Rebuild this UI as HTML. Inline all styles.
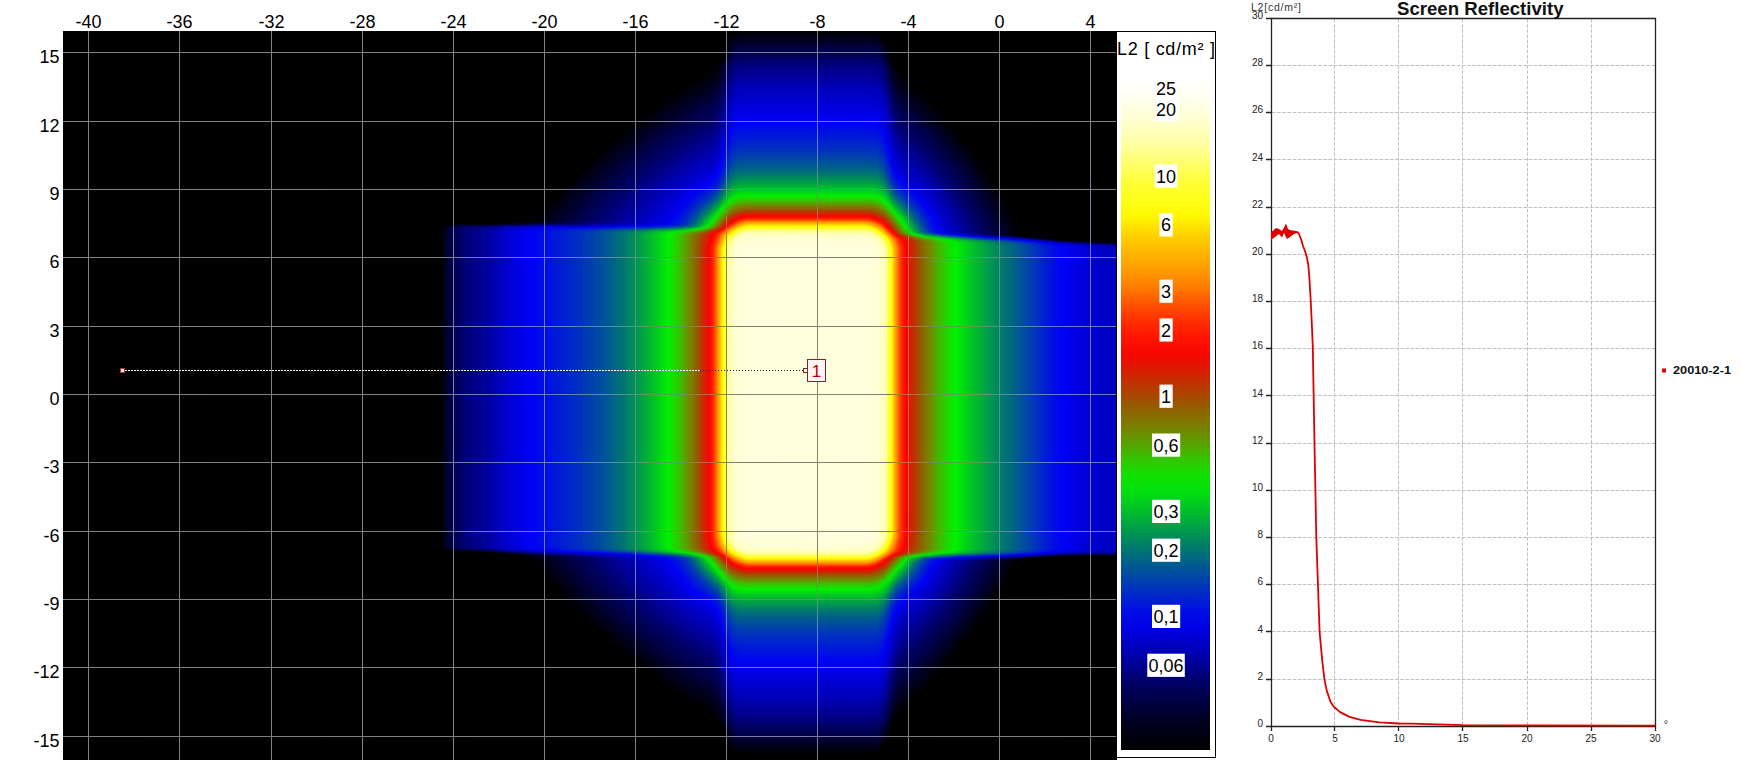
<!DOCTYPE html>
<html><head><meta charset="utf-8"><style>
html,body{margin:0;padding:0;background:#fff;width:1741px;height:760px;overflow:hidden}
svg{display:block}
</style></head><body>
<svg width="1741" height="760" viewBox="0 0 1741 760">
<defs><linearGradient id="cbg" x1="0" y1="0" x2="0" y2="1"><stop offset="0.0000" stop-color="#ffffff"/><stop offset="0.0250" stop-color="#fffffe"/><stop offset="0.0500" stop-color="#fffff1"/><stop offset="0.0750" stop-color="#ffffd9"/><stop offset="0.1000" stop-color="#ffffbe"/><stop offset="0.1250" stop-color="#ffff99"/><stop offset="0.1500" stop-color="#ffff66"/><stop offset="0.1750" stop-color="#ffff38"/><stop offset="0.2000" stop-color="#ffff18"/><stop offset="0.2250" stop-color="#fff700"/><stop offset="0.2500" stop-color="#ffd400"/><stop offset="0.2750" stop-color="#ffb700"/><stop offset="0.3000" stop-color="#ff9e00"/><stop offset="0.3250" stop-color="#ff7f00"/><stop offset="0.3500" stop-color="#ff5700"/><stop offset="0.3750" stop-color="#ff3000"/><stop offset="0.4000" stop-color="#ff1500"/><stop offset="0.4250" stop-color="#f70600"/><stop offset="0.4500" stop-color="#d71f00"/><stop offset="0.4750" stop-color="#b63a00"/><stop offset="0.5000" stop-color="#955b00"/><stop offset="0.5250" stop-color="#7f7800"/><stop offset="0.5500" stop-color="#609a00"/><stop offset="0.5750" stop-color="#39c100"/><stop offset="0.6000" stop-color="#12e100"/><stop offset="0.6250" stop-color="#00e00e"/><stop offset="0.6500" stop-color="#00c128"/><stop offset="0.6750" stop-color="#00a244"/><stop offset="0.7000" stop-color="#008165"/><stop offset="0.7250" stop-color="#006287"/><stop offset="0.7500" stop-color="#0044aa"/><stop offset="0.7750" stop-color="#0027ca"/><stop offset="0.8000" stop-color="#000de7"/><stop offset="0.8250" stop-color="#0000e3"/><stop offset="0.8500" stop-color="#0000c0"/><stop offset="0.8750" stop-color="#000097"/><stop offset="0.9000" stop-color="#00006b"/><stop offset="0.9250" stop-color="#000049"/><stop offset="0.9500" stop-color="#000029"/><stop offset="0.9750" stop-color="#000014"/><stop offset="1.0000" stop-color="#000000"/></linearGradient><linearGradient id="gv0" gradientUnits="userSpaceOnUse" x1="0" y1="31" x2="0" y2="760"><stop offset="0.0007" stop-color="#808080"/><stop offset="0.9993" stop-color="#808080"/></linearGradient><linearGradient id="gv1" gradientUnits="userSpaceOnUse" x1="0" y1="31" x2="0" y2="760"><stop offset="0.0007" stop-color="#808080"/><stop offset="0.9993" stop-color="#808080"/></linearGradient><linearGradient id="gv2" gradientUnits="userSpaceOnUse" x1="0" y1="31" x2="0" y2="760"><stop offset="0.0007" stop-color="#808080"/><stop offset="0.9993" stop-color="#808080"/></linearGradient><linearGradient id="gv3" gradientUnits="userSpaceOnUse" x1="0" y1="31" x2="0" y2="760"><stop offset="0.0007" stop-color="#808080"/><stop offset="0.9993" stop-color="#808080"/></linearGradient><linearGradient id="gv4" gradientUnits="userSpaceOnUse" x1="0" y1="31" x2="0" y2="760"><stop offset="0.0007" stop-color="#808080"/><stop offset="0.2654" stop-color="#7e7e88"/><stop offset="0.2668" stop-color="#7d7d92"/><stop offset="0.2682" stop-color="#7c7c9c"/><stop offset="0.2709" stop-color="#7b7ba3"/><stop offset="0.7112" stop-color="#7d7d95"/><stop offset="0.7126" stop-color="#7e7e8b"/><stop offset="0.7140" stop-color="#808080"/><stop offset="0.9993" stop-color="#808080"/></linearGradient><linearGradient id="gv5" gradientUnits="userSpaceOnUse" x1="0" y1="31" x2="0" y2="760"><stop offset="0.0007" stop-color="#808080"/><stop offset="0.2572" stop-color="#7f7f86"/><stop offset="0.2613" stop-color="#7e7e8d"/><stop offset="0.2627" stop-color="#7d7d95"/><stop offset="0.2641" stop-color="#7b7ba3"/><stop offset="0.2654" stop-color="#7979b6"/><stop offset="0.2668" stop-color="#7676cb"/><stop offset="0.2682" stop-color="#7474da"/><stop offset="0.2695" stop-color="#7272e5"/><stop offset="0.2709" stop-color="#7272ec"/><stop offset="0.2737" stop-color="#6f75e3"/><stop offset="0.7112" stop-color="#7172e9"/><stop offset="0.7140" stop-color="#7373df"/><stop offset="0.7154" stop-color="#7575d2"/><stop offset="0.7167" stop-color="#7777bf"/><stop offset="0.7181" stop-color="#7a7aab"/><stop offset="0.7195" stop-color="#7c7c9c"/><stop offset="0.7209" stop-color="#7d7d91"/><stop offset="0.7236" stop-color="#7e7e8b"/><stop offset="0.7373" stop-color="#7f7f85"/><stop offset="0.9993" stop-color="#808080"/></linearGradient><linearGradient id="gv6" gradientUnits="userSpaceOnUse" x1="0" y1="31" x2="0" y2="760"><stop offset="0.0007" stop-color="#808080"/><stop offset="0.1351" stop-color="#7f7f86"/><stop offset="0.1461" stop-color="#7e7e8c"/><stop offset="0.1571" stop-color="#7d7d93"/><stop offset="0.1653" stop-color="#7c7c99"/><stop offset="0.1763" stop-color="#7b7b9f"/><stop offset="0.1872" stop-color="#7b7ba5"/><stop offset="0.1996" stop-color="#7a7aac"/><stop offset="0.2092" stop-color="#7979b2"/><stop offset="0.2188" stop-color="#7878b8"/><stop offset="0.2298" stop-color="#7777bf"/><stop offset="0.2407" stop-color="#7777c5"/><stop offset="0.2531" stop-color="#7676cc"/><stop offset="0.2627" stop-color="#7575d2"/><stop offset="0.2654" stop-color="#7373dd"/><stop offset="0.2668" stop-color="#7272e8"/><stop offset="0.2682" stop-color="#6d77dd"/><stop offset="0.2695" stop-color="#677ec7"/><stop offset="0.2709" stop-color="#6086af"/><stop offset="0.2723" stop-color="#5a8d9b"/><stop offset="0.2737" stop-color="#56928d"/><stop offset="0.2750" stop-color="#539683"/><stop offset="0.2778" stop-color="#50987b"/><stop offset="0.7126" stop-color="#549487"/><stop offset="0.7140" stop-color="#589093"/><stop offset="0.7154" stop-color="#5d8aa4"/><stop offset="0.7167" stop-color="#6383ba"/><stop offset="0.7181" stop-color="#6a7bd1"/><stop offset="0.7195" stop-color="#7073e6"/><stop offset="0.7222" stop-color="#7474da"/><stop offset="0.7250" stop-color="#7575d2"/><stop offset="0.7373" stop-color="#7676cc"/><stop offset="0.7497" stop-color="#7676c6"/><stop offset="0.7606" stop-color="#7777c0"/><stop offset="0.7716" stop-color="#7878b9"/><stop offset="0.7812" stop-color="#7979b3"/><stop offset="0.7908" stop-color="#7a7aac"/><stop offset="0.8032" stop-color="#7b7ba6"/><stop offset="0.8155" stop-color="#7b7b9f"/><stop offset="0.8265" stop-color="#7c7c99"/><stop offset="0.8347" stop-color="#7d7d93"/><stop offset="0.8457" stop-color="#7e7e8c"/><stop offset="0.8567" stop-color="#7f7f86"/><stop offset="0.8676" stop-color="#808080"/><stop offset="0.9993" stop-color="#808080"/></linearGradient><linearGradient id="gv7" gradientUnits="userSpaceOnUse" x1="0" y1="31" x2="0" y2="760"><stop offset="0.0007" stop-color="#808080"/><stop offset="0.0254" stop-color="#7f7f86"/><stop offset="0.0322" stop-color="#7e7e8c"/><stop offset="0.0391" stop-color="#7d7d93"/><stop offset="0.0446" stop-color="#7c7c9b"/><stop offset="0.0514" stop-color="#7b7ba1"/><stop offset="0.0610" stop-color="#7a7aa8"/><stop offset="0.0693" stop-color="#7979ae"/><stop offset="0.0761" stop-color="#7979b5"/><stop offset="0.0830" stop-color="#7878bb"/><stop offset="0.0912" stop-color="#7777c1"/><stop offset="0.0995" stop-color="#7676c8"/><stop offset="0.1077" stop-color="#7575ce"/><stop offset="0.1173" stop-color="#7575d4"/><stop offset="0.1269" stop-color="#7474da"/><stop offset="0.1365" stop-color="#7373e1"/><stop offset="0.1461" stop-color="#7272e7"/><stop offset="0.1653" stop-color="#6e76e0"/><stop offset="0.1722" stop-color="#6c78d8"/><stop offset="0.1776" stop-color="#6a7bd2"/><stop offset="0.1831" stop-color="#687dcb"/><stop offset="0.1886" stop-color="#6580c3"/><stop offset="0.1927" stop-color="#6382bb"/><stop offset="0.1968" stop-color="#6185b3"/><stop offset="0.2010" stop-color="#5e88ab"/><stop offset="0.2037" stop-color="#5d8aa5"/><stop offset="0.2064" stop-color="#5b8c9e"/><stop offset="0.2092" stop-color="#598f97"/><stop offset="0.2119" stop-color="#579190"/><stop offset="0.2147" stop-color="#549488"/><stop offset="0.2174" stop-color="#52977f"/><stop offset="0.2202" stop-color="#4f9a76"/><stop offset="0.2229" stop-color="#4b9e6c"/><stop offset="0.2257" stop-color="#48a163"/><stop offset="0.2284" stop-color="#45a55a"/><stop offset="0.2311" stop-color="#41a850"/><stop offset="0.2339" stop-color="#3eac45"/><stop offset="0.2366" stop-color="#3ab13a"/><stop offset="0.2394" stop-color="#45ab3b"/><stop offset="0.2407" stop-color="#4ba73c"/><stop offset="0.2421" stop-color="#52a33d"/><stop offset="0.2435" stop-color="#59a03e"/><stop offset="0.2449" stop-color="#619b40"/><stop offset="0.2462" stop-color="#699742"/><stop offset="0.2476" stop-color="#719343"/><stop offset="0.2490" stop-color="#798e45"/><stop offset="0.2503" stop-color="#828947"/><stop offset="0.2531" stop-color="#8c834b"/><stop offset="0.2558" stop-color="#987d4e"/><stop offset="0.2572" stop-color="#a07850"/><stop offset="0.2586" stop-color="#a87452"/><stop offset="0.2599" stop-color="#b06f54"/><stop offset="0.2613" stop-color="#b86b55"/><stop offset="0.2627" stop-color="#bf6756"/><stop offset="0.2641" stop-color="#c76357"/><stop offset="0.2654" stop-color="#d05e58"/><stop offset="0.2668" stop-color="#d95959"/><stop offset="0.2695" stop-color="#cf6050"/><stop offset="0.2709" stop-color="#c96549"/><stop offset="0.2723" stop-color="#bf6b40"/><stop offset="0.2737" stop-color="#b67236"/><stop offset="0.2750" stop-color="#ae782e"/><stop offset="0.2778" stop-color="#a47f24"/><stop offset="0.2805" stop-color="#9b851b"/><stop offset="0.2833" stop-color="#928b12"/><stop offset="0.2874" stop-color="#8d8d19"/><stop offset="0.2901" stop-color="#8b8b23"/><stop offset="0.2929" stop-color="#8a8a2a"/><stop offset="0.2956" stop-color="#898933"/><stop offset="0.2984" stop-color="#88883c"/><stop offset="0.3025" stop-color="#878744"/><stop offset="0.6934" stop-color="#88883c"/><stop offset="0.6962" stop-color="#898933"/><stop offset="0.6989" stop-color="#8a8a2a"/><stop offset="0.7016" stop-color="#8b8b23"/><stop offset="0.7044" stop-color="#8d8d19"/><stop offset="0.7071" stop-color="#8e8e0f"/><stop offset="0.7099" stop-color="#968817"/><stop offset="0.7126" stop-color="#a08220"/><stop offset="0.7154" stop-color="#a97b29"/><stop offset="0.7181" stop-color="#b77138"/><stop offset="0.7195" stop-color="#c16a41"/><stop offset="0.7209" stop-color="#ca644a"/><stop offset="0.7236" stop-color="#d55c55"/><stop offset="0.7277" stop-color="#c76357"/><stop offset="0.7291" stop-color="#bf6756"/><stop offset="0.7305" stop-color="#b86b55"/><stop offset="0.7318" stop-color="#b06f54"/><stop offset="0.7332" stop-color="#a87452"/><stop offset="0.7346" stop-color="#a07850"/><stop offset="0.7359" stop-color="#987d4e"/><stop offset="0.7373" stop-color="#91804d"/><stop offset="0.7401" stop-color="#878649"/><stop offset="0.7428" stop-color="#798e45"/><stop offset="0.7442" stop-color="#719343"/><stop offset="0.7455" stop-color="#699742"/><stop offset="0.7469" stop-color="#619b40"/><stop offset="0.7483" stop-color="#59a03e"/><stop offset="0.7497" stop-color="#52a33d"/><stop offset="0.7510" stop-color="#4ba73c"/><stop offset="0.7524" stop-color="#45ab3b"/><stop offset="0.7538" stop-color="#3eae3a"/><stop offset="0.7565" stop-color="#3cae40"/><stop offset="0.7593" stop-color="#3faa4b"/><stop offset="0.7620" stop-color="#43a755"/><stop offset="0.7647" stop-color="#47a35e"/><stop offset="0.7675" stop-color="#4aa067"/><stop offset="0.7702" stop-color="#4d9c71"/><stop offset="0.7730" stop-color="#50997b"/><stop offset="0.7757" stop-color="#539584"/><stop offset="0.7785" stop-color="#56928c"/><stop offset="0.7812" stop-color="#589094"/><stop offset="0.7840" stop-color="#5a8d9b"/><stop offset="0.7867" stop-color="#5c8ba1"/><stop offset="0.7894" stop-color="#5e89a8"/><stop offset="0.7936" stop-color="#6086b0"/><stop offset="0.7977" stop-color="#6283b9"/><stop offset="0.8018" stop-color="#6581c0"/><stop offset="0.8059" stop-color="#677ec7"/><stop offset="0.8114" stop-color="#697cce"/><stop offset="0.8169" stop-color="#6b79d5"/><stop offset="0.8224" stop-color="#6d77db"/><stop offset="0.8292" stop-color="#6f75e3"/><stop offset="0.8361" stop-color="#7172ea"/><stop offset="0.8512" stop-color="#7373e3"/><stop offset="0.8608" stop-color="#7373dd"/><stop offset="0.8704" stop-color="#7474d7"/><stop offset="0.8800" stop-color="#7575d1"/><stop offset="0.8882" stop-color="#7676cb"/><stop offset="0.8964" stop-color="#7777c4"/><stop offset="0.9047" stop-color="#7777be"/><stop offset="0.9129" stop-color="#7878b8"/><stop offset="0.9198" stop-color="#7979b1"/><stop offset="0.9266" stop-color="#7a7aab"/><stop offset="0.9362" stop-color="#7b7ba4"/><stop offset="0.9458" stop-color="#7c7c9c"/><stop offset="0.9513" stop-color="#7d7d95"/><stop offset="0.9568" stop-color="#7e7e8f"/><stop offset="0.9636" stop-color="#7e7e89"/><stop offset="0.9705" stop-color="#7f7f82"/><stop offset="0.9993" stop-color="#808080"/></linearGradient><linearGradient id="gv8" gradientUnits="userSpaceOnUse" x1="0" y1="31" x2="0" y2="760"><stop offset="0.0007" stop-color="#7f7f83"/><stop offset="0.0075" stop-color="#7e7e8a"/><stop offset="0.0144" stop-color="#7d7d91"/><stop offset="0.0185" stop-color="#7c7c97"/><stop offset="0.0240" stop-color="#7c7c9d"/><stop offset="0.0309" stop-color="#7b7ba4"/><stop offset="0.0377" stop-color="#7a7aac"/><stop offset="0.0432" stop-color="#7979b3"/><stop offset="0.0487" stop-color="#7878ba"/><stop offset="0.0569" stop-color="#7777c0"/><stop offset="0.0652" stop-color="#7676c7"/><stop offset="0.0734" stop-color="#7575ce"/><stop offset="0.0830" stop-color="#7575d4"/><stop offset="0.0940" stop-color="#7474da"/><stop offset="0.1049" stop-color="#7373e1"/><stop offset="0.1159" stop-color="#7272e8"/><stop offset="0.1351" stop-color="#6e75e1"/><stop offset="0.1420" stop-color="#6c77db"/><stop offset="0.1488" stop-color="#6a7ad4"/><stop offset="0.1557" stop-color="#687ccd"/><stop offset="0.1626" stop-color="#667fc6"/><stop offset="0.1680" stop-color="#6481be"/><stop offset="0.1735" stop-color="#6284b6"/><stop offset="0.1776" stop-color="#6086b0"/><stop offset="0.1818" stop-color="#5e89a9"/><stop offset="0.1859" stop-color="#5c8ba1"/><stop offset="0.1900" stop-color="#5a8e99"/><stop offset="0.1941" stop-color="#579191"/><stop offset="0.1968" stop-color="#55938b"/><stop offset="0.1996" stop-color="#539584"/><stop offset="0.2023" stop-color="#51987e"/><stop offset="0.2051" stop-color="#4f9a76"/><stop offset="0.2078" stop-color="#4c9d6e"/><stop offset="0.2106" stop-color="#4aa066"/><stop offset="0.2133" stop-color="#47a35f"/><stop offset="0.2160" stop-color="#44a657"/><stop offset="0.2188" stop-color="#41a94e"/><stop offset="0.2215" stop-color="#3dac45"/><stop offset="0.2243" stop-color="#3ab03b"/><stop offset="0.2270" stop-color="#43ac3b"/><stop offset="0.2284" stop-color="#49a93c"/><stop offset="0.2298" stop-color="#4fa53d"/><stop offset="0.2311" stop-color="#56a13e"/><stop offset="0.2325" stop-color="#5d9e3f"/><stop offset="0.2339" stop-color="#659941"/><stop offset="0.2353" stop-color="#6d9542"/><stop offset="0.2366" stop-color="#759044"/><stop offset="0.2380" stop-color="#7d8c46"/><stop offset="0.2394" stop-color="#858848"/><stop offset="0.2421" stop-color="#8f824c"/><stop offset="0.2435" stop-color="#957e4e"/><stop offset="0.2449" stop-color="#9e7950"/><stop offset="0.2462" stop-color="#a67551"/><stop offset="0.2476" stop-color="#af7053"/><stop offset="0.2490" stop-color="#b86b55"/><stop offset="0.2503" stop-color="#c16656"/><stop offset="0.2517" stop-color="#ca6257"/><stop offset="0.2531" stop-color="#d35c59"/><stop offset="0.2558" stop-color="#d25e52"/><stop offset="0.2586" stop-color="#c46845"/><stop offset="0.2599" stop-color="#bb6e3c"/><stop offset="0.2613" stop-color="#b17532"/><stop offset="0.2627" stop-color="#aa7a2b"/><stop offset="0.2641" stop-color="#a37f24"/><stop offset="0.2654" stop-color="#9c841d"/><stop offset="0.2668" stop-color="#938a14"/><stop offset="0.2695" stop-color="#8c8c1f"/><stop offset="0.2709" stop-color="#8a8a2a"/><stop offset="0.2723" stop-color="#88883a"/><stop offset="0.2737" stop-color="#878748"/><stop offset="0.2750" stop-color="#858551"/><stop offset="0.2764" stop-color="#84845a"/><stop offset="0.2791" stop-color="#838363"/><stop offset="0.2833" stop-color="#82826b"/><stop offset="0.7126" stop-color="#838365"/><stop offset="0.7154" stop-color="#84845e"/><stop offset="0.7167" stop-color="#858556"/><stop offset="0.7181" stop-color="#86864c"/><stop offset="0.7195" stop-color="#88883e"/><stop offset="0.7209" stop-color="#8a8a2c"/><stop offset="0.7222" stop-color="#8c8c20"/><stop offset="0.7236" stop-color="#8d8d14"/><stop offset="0.7263" stop-color="#9c841d"/><stop offset="0.7277" stop-color="#a37f24"/><stop offset="0.7291" stop-color="#aa7a2b"/><stop offset="0.7305" stop-color="#b17532"/><stop offset="0.7318" stop-color="#bb6e3c"/><stop offset="0.7332" stop-color="#c46845"/><stop offset="0.7346" stop-color="#cc624d"/><stop offset="0.7373" stop-color="#d75b57"/><stop offset="0.7401" stop-color="#ca6257"/><stop offset="0.7414" stop-color="#c16656"/><stop offset="0.7428" stop-color="#b86b55"/><stop offset="0.7442" stop-color="#af7053"/><stop offset="0.7455" stop-color="#a67551"/><stop offset="0.7469" stop-color="#9e7950"/><stop offset="0.7483" stop-color="#957e4e"/><stop offset="0.7497" stop-color="#8f824c"/><stop offset="0.7524" stop-color="#858848"/><stop offset="0.7538" stop-color="#7d8c46"/><stop offset="0.7551" stop-color="#759044"/><stop offset="0.7565" stop-color="#6d9542"/><stop offset="0.7579" stop-color="#659941"/><stop offset="0.7593" stop-color="#5d9e3f"/><stop offset="0.7606" stop-color="#56a13e"/><stop offset="0.7620" stop-color="#4fa53d"/><stop offset="0.7634" stop-color="#49a93c"/><stop offset="0.7647" stop-color="#43ac3b"/><stop offset="0.7661" stop-color="#3caf3a"/><stop offset="0.7689" stop-color="#3cae40"/><stop offset="0.7716" stop-color="#3fab4a"/><stop offset="0.7743" stop-color="#42a753"/><stop offset="0.7771" stop-color="#45a45b"/><stop offset="0.7798" stop-color="#48a163"/><stop offset="0.7826" stop-color="#4b9e6a"/><stop offset="0.7853" stop-color="#4d9c72"/><stop offset="0.7881" stop-color="#50997a"/><stop offset="0.7908" stop-color="#529681"/><stop offset="0.7936" stop-color="#549488"/><stop offset="0.7963" stop-color="#56928e"/><stop offset="0.8004" stop-color="#598f97"/><stop offset="0.8045" stop-color="#5b8c9f"/><stop offset="0.8086" stop-color="#5d89a6"/><stop offset="0.8128" stop-color="#5f87ad"/><stop offset="0.8169" stop-color="#6185b4"/><stop offset="0.8210" stop-color="#6383ba"/><stop offset="0.8265" stop-color="#6580c2"/><stop offset="0.8320" stop-color="#677ec9"/><stop offset="0.8388" stop-color="#697bd0"/><stop offset="0.8457" stop-color="#6b79d7"/><stop offset="0.8525" stop-color="#6d77dd"/><stop offset="0.8594" stop-color="#6f74e4"/><stop offset="0.8663" stop-color="#7172ea"/><stop offset="0.8827" stop-color="#7373e3"/><stop offset="0.8937" stop-color="#7373dd"/><stop offset="0.9047" stop-color="#7474d7"/><stop offset="0.9156" stop-color="#7575d0"/><stop offset="0.9239" stop-color="#7676c9"/><stop offset="0.9321" stop-color="#7777c3"/><stop offset="0.9403" stop-color="#7878bc"/><stop offset="0.9472" stop-color="#7979b5"/><stop offset="0.9527" stop-color="#7a7aad"/><stop offset="0.9582" stop-color="#7a7aa7"/><stop offset="0.9650" stop-color="#7b7ba0"/><stop offset="0.9719" stop-color="#7c7c99"/><stop offset="0.9760" stop-color="#7d7d93"/><stop offset="0.9815" stop-color="#7e7e8c"/><stop offset="0.9883" stop-color="#7f7f85"/><stop offset="0.9993" stop-color="#808080"/></linearGradient><linearGradient id="gv9" gradientUnits="userSpaceOnUse" x1="0" y1="31" x2="0" y2="760"><stop offset="0.0007" stop-color="#808080"/><stop offset="0.0775" stop-color="#7f7f86"/><stop offset="0.0885" stop-color="#7e7e8d"/><stop offset="0.0981" stop-color="#7d7d93"/><stop offset="0.1063" stop-color="#7c7c99"/><stop offset="0.1173" stop-color="#7b7ba0"/><stop offset="0.1283" stop-color="#7a7aa7"/><stop offset="0.1392" stop-color="#7a7aae"/><stop offset="0.1475" stop-color="#7979b4"/><stop offset="0.1557" stop-color="#7878bb"/><stop offset="0.1639" stop-color="#7777c1"/><stop offset="0.1722" stop-color="#7676c7"/><stop offset="0.1804" stop-color="#7575ce"/><stop offset="0.1900" stop-color="#7575d4"/><stop offset="0.1982" stop-color="#7474db"/><stop offset="0.2051" stop-color="#7373e1"/><stop offset="0.2106" stop-color="#7272e7"/><stop offset="0.2215" stop-color="#6e76df"/><stop offset="0.2257" stop-color="#6b79d7"/><stop offset="0.2284" stop-color="#697bd1"/><stop offset="0.2311" stop-color="#687dca"/><stop offset="0.2339" stop-color="#6580c3"/><stop offset="0.2366" stop-color="#6382bb"/><stop offset="0.2394" stop-color="#6185b2"/><stop offset="0.2421" stop-color="#5e89a9"/><stop offset="0.2449" stop-color="#5b8c9f"/><stop offset="0.2476" stop-color="#588f95"/><stop offset="0.2503" stop-color="#55938b"/><stop offset="0.2531" stop-color="#529780"/><stop offset="0.2558" stop-color="#4f9a76"/><stop offset="0.2586" stop-color="#4b9e6b"/><stop offset="0.2613" stop-color="#48a262"/><stop offset="0.2641" stop-color="#45a559"/><stop offset="0.2668" stop-color="#41a850"/><stop offset="0.2695" stop-color="#3eac47"/><stop offset="0.2723" stop-color="#3baf3e"/><stop offset="0.2750" stop-color="#41ad3a"/><stop offset="0.2764" stop-color="#4da63c"/><stop offset="0.2778" stop-color="#5f9d3f"/><stop offset="0.2791" stop-color="#769044"/><stop offset="0.2805" stop-color="#8a844a"/><stop offset="0.2819" stop-color="#9b7b4f"/><stop offset="0.2833" stop-color="#ac7153"/><stop offset="0.2846" stop-color="#b86b55"/><stop offset="0.2860" stop-color="#c06756"/><stop offset="0.2888" stop-color="#c86257"/><stop offset="0.2997" stop-color="#ce5f58"/><stop offset="0.7058" stop-color="#c86357"/><stop offset="0.7126" stop-color="#bf6756"/><stop offset="0.7154" stop-color="#b06f54"/><stop offset="0.7167" stop-color="#a27751"/><stop offset="0.7181" stop-color="#90814c"/><stop offset="0.7195" stop-color="#7f8b46"/><stop offset="0.7209" stop-color="#629b40"/><stop offset="0.7222" stop-color="#49a83c"/><stop offset="0.7236" stop-color="#3ab03d"/><stop offset="0.7250" stop-color="#3fab49"/><stop offset="0.7263" stop-color="#42a852"/><stop offset="0.7277" stop-color="#44a558"/><stop offset="0.7305" stop-color="#48a262"/><stop offset="0.7332" stop-color="#4b9e6b"/><stop offset="0.7359" stop-color="#4f9a76"/><stop offset="0.7387" stop-color="#529780"/><stop offset="0.7414" stop-color="#55938b"/><stop offset="0.7442" stop-color="#588f95"/><stop offset="0.7469" stop-color="#5b8c9f"/><stop offset="0.7497" stop-color="#5e89a9"/><stop offset="0.7524" stop-color="#6185b2"/><stop offset="0.7551" stop-color="#6382bb"/><stop offset="0.7579" stop-color="#6580c3"/><stop offset="0.7606" stop-color="#687dca"/><stop offset="0.7634" stop-color="#697bd1"/><stop offset="0.7661" stop-color="#6b79d7"/><stop offset="0.7702" stop-color="#6e76df"/><stop offset="0.7743" stop-color="#7073e7"/><stop offset="0.7867" stop-color="#7373e1"/><stop offset="0.7936" stop-color="#7474db"/><stop offset="0.8018" stop-color="#7575d4"/><stop offset="0.8114" stop-color="#7575ce"/><stop offset="0.8196" stop-color="#7676c7"/><stop offset="0.8278" stop-color="#7777c1"/><stop offset="0.8361" stop-color="#7878bb"/><stop offset="0.8443" stop-color="#7979b4"/><stop offset="0.8525" stop-color="#7a7aae"/><stop offset="0.8621" stop-color="#7a7aa8"/><stop offset="0.8731" stop-color="#7b7ba1"/><stop offset="0.8841" stop-color="#7c7c9a"/><stop offset="0.8923" stop-color="#7d7d94"/><stop offset="0.9019" stop-color="#7e7e8e"/><stop offset="0.9129" stop-color="#7f7f87"/><stop offset="0.9225" stop-color="#7f7f81"/><stop offset="0.9993" stop-color="#808080"/></linearGradient><linearGradient id="gv10" gradientUnits="userSpaceOnUse" x1="0" y1="31" x2="0" y2="760"><stop offset="0.0007" stop-color="#808080"/><stop offset="0.2325" stop-color="#7f7f86"/><stop offset="0.2476" stop-color="#7e7e8d"/><stop offset="0.2641" stop-color="#7d7d93"/><stop offset="0.2778" stop-color="#7c7c9b"/><stop offset="0.2791" stop-color="#7b7ba2"/><stop offset="0.2805" stop-color="#7979af"/><stop offset="0.2819" stop-color="#7676c8"/><stop offset="0.2833" stop-color="#7373e1"/><stop offset="0.2846" stop-color="#6d77dd"/><stop offset="0.2860" stop-color="#6580c2"/><stop offset="0.2874" stop-color="#5e88aa"/><stop offset="0.2888" stop-color="#5a8e9a"/><stop offset="0.2901" stop-color="#579190"/><stop offset="0.2929" stop-color="#549487"/><stop offset="0.7140" stop-color="#57918f"/><stop offset="0.7154" stop-color="#598e98"/><stop offset="0.7167" stop-color="#5e89a8"/><stop offset="0.7181" stop-color="#6481bf"/><stop offset="0.7195" stop-color="#6c78d9"/><stop offset="0.7209" stop-color="#7373e3"/><stop offset="0.7222" stop-color="#7676cb"/><stop offset="0.7236" stop-color="#7979b0"/><stop offset="0.7250" stop-color="#7b7ba1"/><stop offset="0.7263" stop-color="#7c7c99"/><stop offset="0.7291" stop-color="#7d7d93"/><stop offset="0.7442" stop-color="#7e7e8d"/><stop offset="0.7593" stop-color="#7f7f86"/><stop offset="0.7730" stop-color="#808080"/><stop offset="0.9993" stop-color="#808080"/></linearGradient><linearGradient id="gv11" gradientUnits="userSpaceOnUse" x1="0" y1="31" x2="0" y2="760"><stop offset="0.0007" stop-color="#808080"/><stop offset="0.2901" stop-color="#7b7b9f"/><stop offset="0.2915" stop-color="#7878b9"/><stop offset="0.2929" stop-color="#7676cc"/><stop offset="0.2942" stop-color="#7474d5"/><stop offset="0.2970" stop-color="#7474dc"/><stop offset="0.7154" stop-color="#7575d0"/><stop offset="0.7167" stop-color="#7777c0"/><stop offset="0.7181" stop-color="#7a7aa7"/><stop offset="0.7195" stop-color="#7e7e8b"/><stop offset="0.7209" stop-color="#808080"/><stop offset="0.9993" stop-color="#808080"/></linearGradient><linearGradient id="gh12" gradientUnits="userSpaceOnUse" x1="63" y1="0" x2="1117" y2="0"><stop offset="0.0005" stop-color="#808080"/><stop offset="0.6286" stop-color="#7f7f86"/><stop offset="0.6305" stop-color="#7e7e8d"/><stop offset="0.6333" stop-color="#7d7d96"/><stop offset="0.6361" stop-color="#7c7c9d"/><stop offset="0.7785" stop-color="#7d7d96"/><stop offset="0.7804" stop-color="#7d7d90"/><stop offset="0.7832" stop-color="#7f7f86"/><stop offset="0.7851" stop-color="#808080"/><stop offset="0.9995" stop-color="#808080"/></linearGradient><linearGradient id="gh13" gradientUnits="userSpaceOnUse" x1="63" y1="0" x2="1117" y2="0"><stop offset="0.0005" stop-color="#808080"/><stop offset="0.5527" stop-color="#7f7f86"/><stop offset="0.5631" stop-color="#7e7e8d"/><stop offset="0.5726" stop-color="#7d7d93"/><stop offset="0.5802" stop-color="#7c7c99"/><stop offset="0.5906" stop-color="#7b7b9f"/><stop offset="0.6020" stop-color="#7b7ba6"/><stop offset="0.6134" stop-color="#7a7aac"/><stop offset="0.6191" stop-color="#7979b3"/><stop offset="0.6219" stop-color="#7878ba"/><stop offset="0.6238" stop-color="#7777c1"/><stop offset="0.6257" stop-color="#7676c9"/><stop offset="0.6276" stop-color="#7575d2"/><stop offset="0.6295" stop-color="#7474d9"/><stop offset="0.6314" stop-color="#7373df"/><stop offset="0.6343" stop-color="#7272e6"/><stop offset="0.6399" stop-color="#7272ec"/><stop offset="0.7775" stop-color="#7272e6"/><stop offset="0.7804" stop-color="#7373df"/><stop offset="0.7823" stop-color="#7474d9"/><stop offset="0.7842" stop-color="#7575d1"/><stop offset="0.7861" stop-color="#7676c8"/><stop offset="0.7880" stop-color="#7777bf"/><stop offset="0.7898" stop-color="#7878b8"/><stop offset="0.7927" stop-color="#7979af"/><stop offset="0.7974" stop-color="#7a7aa8"/><stop offset="0.8050" stop-color="#7b7ba2"/><stop offset="0.8126" stop-color="#7c7c9b"/><stop offset="0.8193" stop-color="#7d7d94"/><stop offset="0.8259" stop-color="#7e7e8d"/><stop offset="0.8325" stop-color="#7f7f87"/><stop offset="0.8392" stop-color="#7f7f81"/><stop offset="0.9995" stop-color="#808080"/></linearGradient><linearGradient id="gh14" gradientUnits="userSpaceOnUse" x1="63" y1="0" x2="1117" y2="0"><stop offset="0.0005" stop-color="#808080"/><stop offset="0.4806" stop-color="#7f7f86"/><stop offset="0.4891" stop-color="#7e7e8c"/><stop offset="0.4976" stop-color="#7d7d93"/><stop offset="0.5043" stop-color="#7c7c99"/><stop offset="0.5128" stop-color="#7b7b9f"/><stop offset="0.5213" stop-color="#7b7ba5"/><stop offset="0.5308" stop-color="#7a7aac"/><stop offset="0.5375" stop-color="#7979b2"/><stop offset="0.5441" stop-color="#7878b8"/><stop offset="0.5517" stop-color="#7777bf"/><stop offset="0.5593" stop-color="#7777c5"/><stop offset="0.5669" stop-color="#7676cc"/><stop offset="0.5745" stop-color="#7575d2"/><stop offset="0.5830" stop-color="#7474d8"/><stop offset="0.5906" stop-color="#7373df"/><stop offset="0.5972" stop-color="#7272e6"/><stop offset="0.6029" stop-color="#7172ec"/><stop offset="0.6067" stop-color="#7074e5"/><stop offset="0.6105" stop-color="#6e76df"/><stop offset="0.6143" stop-color="#6b79d7"/><stop offset="0.6172" stop-color="#697bd0"/><stop offset="0.6191" stop-color="#677ec9"/><stop offset="0.6210" stop-color="#6581c0"/><stop offset="0.6229" stop-color="#6185b4"/><stop offset="0.6238" stop-color="#5f87ad"/><stop offset="0.6248" stop-color="#5d8aa6"/><stop offset="0.6257" stop-color="#5b8c9e"/><stop offset="0.6267" stop-color="#598f96"/><stop offset="0.6276" stop-color="#56928e"/><stop offset="0.6286" stop-color="#549487"/><stop offset="0.6295" stop-color="#52977f"/><stop offset="0.6305" stop-color="#4f9978"/><stop offset="0.6314" stop-color="#4d9c72"/><stop offset="0.6333" stop-color="#4a9f68"/><stop offset="0.6352" stop-color="#48a261"/><stop offset="0.6380" stop-color="#45a45a"/><stop offset="0.6447" stop-color="#43a754"/><stop offset="0.7737" stop-color="#45a45a"/><stop offset="0.7766" stop-color="#48a261"/><stop offset="0.7785" stop-color="#4a9f68"/><stop offset="0.7804" stop-color="#4d9c72"/><stop offset="0.7813" stop-color="#4f9978"/><stop offset="0.7823" stop-color="#52977f"/><stop offset="0.7832" stop-color="#549487"/><stop offset="0.7842" stop-color="#57918f"/><stop offset="0.7851" stop-color="#598f97"/><stop offset="0.7861" stop-color="#5b8c9f"/><stop offset="0.7870" stop-color="#5d89a7"/><stop offset="0.7880" stop-color="#6087af"/><stop offset="0.7889" stop-color="#6284b6"/><stop offset="0.7898" stop-color="#6482bd"/><stop offset="0.7908" stop-color="#6580c3"/><stop offset="0.7927" stop-color="#687dcc"/><stop offset="0.7946" stop-color="#6a7ad3"/><stop offset="0.7974" stop-color="#6d77dc"/><stop offset="0.8003" stop-color="#6f75e3"/><stop offset="0.8031" stop-color="#7172e9"/><stop offset="0.8107" stop-color="#7373e2"/><stop offset="0.8155" stop-color="#7474db"/><stop offset="0.8202" stop-color="#7575d5"/><stop offset="0.8259" stop-color="#7575ce"/><stop offset="0.8306" stop-color="#7676c7"/><stop offset="0.8354" stop-color="#7777c0"/><stop offset="0.8401" stop-color="#7878b9"/><stop offset="0.8449" stop-color="#7979b2"/><stop offset="0.8496" stop-color="#7a7aab"/><stop offset="0.8553" stop-color="#7b7ba5"/><stop offset="0.8610" stop-color="#7b7b9f"/><stop offset="0.8667" stop-color="#7c7c99"/><stop offset="0.8714" stop-color="#7d7d92"/><stop offset="0.8781" stop-color="#7e7e8b"/><stop offset="0.8838" stop-color="#7f7f84"/><stop offset="0.9995" stop-color="#808080"/></linearGradient><linearGradient id="gh15" gradientUnits="userSpaceOnUse" x1="63" y1="0" x2="1117" y2="0"><stop offset="0.0005" stop-color="#808080"/><stop offset="0.3601" stop-color="#7e7e87"/><stop offset="0.3629" stop-color="#7d7d90"/><stop offset="0.3657" stop-color="#7c7c99"/><stop offset="0.3686" stop-color="#7b7ba0"/><stop offset="0.3724" stop-color="#7a7aa8"/><stop offset="0.3771" stop-color="#7979af"/><stop offset="0.3828" stop-color="#7979b5"/><stop offset="0.3904" stop-color="#7878bb"/><stop offset="0.3980" stop-color="#7777c2"/><stop offset="0.4046" stop-color="#7676c9"/><stop offset="0.4103" stop-color="#7575cf"/><stop offset="0.4170" stop-color="#7474d6"/><stop offset="0.4236" stop-color="#7474dd"/><stop offset="0.4322" stop-color="#7373e3"/><stop offset="0.4398" stop-color="#7272ea"/><stop offset="0.4540" stop-color="#6f75e3"/><stop offset="0.4625" stop-color="#6d77dd"/><stop offset="0.4701" stop-color="#6b79d6"/><stop offset="0.4777" stop-color="#697bd0"/><stop offset="0.4853" stop-color="#677dca"/><stop offset="0.4919" stop-color="#667fc4"/><stop offset="0.4976" stop-color="#6482be"/><stop offset="0.5033" stop-color="#6284b7"/><stop offset="0.5090" stop-color="#6086b0"/><stop offset="0.5138" stop-color="#5e88a9"/><stop offset="0.5185" stop-color="#5c8ba3"/><stop offset="0.5232" stop-color="#5a8d9c"/><stop offset="0.5280" stop-color="#589094"/><stop offset="0.5318" stop-color="#56928e"/><stop offset="0.5356" stop-color="#549487"/><stop offset="0.5394" stop-color="#529780"/><stop offset="0.5432" stop-color="#509979"/><stop offset="0.5470" stop-color="#4d9c71"/><stop offset="0.5508" stop-color="#4b9f6a"/><stop offset="0.5546" stop-color="#48a162"/><stop offset="0.5583" stop-color="#45a45b"/><stop offset="0.5621" stop-color="#43a753"/><stop offset="0.5650" stop-color="#40a94d"/><stop offset="0.5678" stop-color="#3eac47"/><stop offset="0.5707" stop-color="#3cae40"/><stop offset="0.5735" stop-color="#39b139"/><stop offset="0.5764" stop-color="#41ad3a"/><stop offset="0.5792" stop-color="#49a83c"/><stop offset="0.5821" stop-color="#52a43d"/><stop offset="0.5840" stop-color="#58a03e"/><stop offset="0.5859" stop-color="#5f9d3f"/><stop offset="0.5878" stop-color="#669941"/><stop offset="0.5897" stop-color="#6e9443"/><stop offset="0.5916" stop-color="#769044"/><stop offset="0.5935" stop-color="#7e8b46"/><stop offset="0.5954" stop-color="#868748"/><stop offset="0.5982" stop-color="#8e824b"/><stop offset="0.6001" stop-color="#947f4d"/><stop offset="0.6020" stop-color="#9d7a4f"/><stop offset="0.6039" stop-color="#a77452"/><stop offset="0.6058" stop-color="#b26e54"/><stop offset="0.6077" stop-color="#bc6956"/><stop offset="0.6096" stop-color="#c76357"/><stop offset="0.6115" stop-color="#d25d58"/><stop offset="0.6124" stop-color="#d85a59"/><stop offset="0.6153" stop-color="#d05f51"/><stop offset="0.6172" stop-color="#c96549"/><stop offset="0.6191" stop-color="#bc6d3d"/><stop offset="0.6200" stop-color="#b57336"/><stop offset="0.6210" stop-color="#ae772f"/><stop offset="0.6229" stop-color="#a37f23"/><stop offset="0.6238" stop-color="#9c841d"/><stop offset="0.6248" stop-color="#948a15"/><stop offset="0.6257" stop-color="#8e8e11"/><stop offset="0.6267" stop-color="#8c8c1c"/><stop offset="0.6276" stop-color="#8b8b27"/><stop offset="0.6286" stop-color="#898934"/><stop offset="0.6295" stop-color="#878745"/><stop offset="0.6305" stop-color="#868650"/><stop offset="0.6314" stop-color="#858558"/><stop offset="0.6333" stop-color="#838362"/><stop offset="0.6361" stop-color="#828269"/><stop offset="0.7064" stop-color="#828270"/><stop offset="0.7766" stop-color="#838368"/><stop offset="0.7794" stop-color="#84845f"/><stop offset="0.7813" stop-color="#858552"/><stop offset="0.7823" stop-color="#878747"/><stop offset="0.7832" stop-color="#898936"/><stop offset="0.7842" stop-color="#8b8b28"/><stop offset="0.7851" stop-color="#8c8c1e"/><stop offset="0.7861" stop-color="#8d8d13"/><stop offset="0.7880" stop-color="#9b851c"/><stop offset="0.7889" stop-color="#a28022"/><stop offset="0.7908" stop-color="#ad782d"/><stop offset="0.7927" stop-color="#ba6f3a"/><stop offset="0.7936" stop-color="#c06b40"/><stop offset="0.7955" stop-color="#cb634b"/><stop offset="0.7974" stop-color="#d15f51"/><stop offset="0.8003" stop-color="#d95a59"/><stop offset="0.8022" stop-color="#cf5f58"/><stop offset="0.8041" stop-color="#c56457"/><stop offset="0.8060" stop-color="#bc6956"/><stop offset="0.8079" stop-color="#b46d54"/><stop offset="0.8098" stop-color="#ab7252"/><stop offset="0.8117" stop-color="#a27751"/><stop offset="0.8136" stop-color="#9a7c4f"/><stop offset="0.8155" stop-color="#93804d"/><stop offset="0.8183" stop-color="#8b844a"/><stop offset="0.8212" stop-color="#858848"/><stop offset="0.8231" stop-color="#7f8b46"/><stop offset="0.8250" stop-color="#788f45"/><stop offset="0.8269" stop-color="#719243"/><stop offset="0.8287" stop-color="#6b9642"/><stop offset="0.8306" stop-color="#659941"/><stop offset="0.8335" stop-color="#5c9e3f"/><stop offset="0.8363" stop-color="#54a23d"/><stop offset="0.8392" stop-color="#4da63c"/><stop offset="0.8420" stop-color="#46aa3b"/><stop offset="0.8449" stop-color="#3fae3a"/><stop offset="0.8515" stop-color="#3cae42"/><stop offset="0.8553" stop-color="#3fab49"/><stop offset="0.8591" stop-color="#41a850"/><stop offset="0.8629" stop-color="#44a657"/><stop offset="0.8667" stop-color="#46a35e"/><stop offset="0.8705" stop-color="#49a164"/><stop offset="0.8743" stop-color="#4b9e6b"/><stop offset="0.8781" stop-color="#4d9c72"/><stop offset="0.8819" stop-color="#50997a"/><stop offset="0.8857" stop-color="#529780"/><stop offset="0.8895" stop-color="#549487"/><stop offset="0.8933" stop-color="#56928e"/><stop offset="0.8971" stop-color="#588f95"/><stop offset="0.9009" stop-color="#5a8d9b"/><stop offset="0.9046" stop-color="#5c8ba1"/><stop offset="0.9084" stop-color="#5e89a8"/><stop offset="0.9122" stop-color="#6086af"/><stop offset="0.9160" stop-color="#6284b7"/><stop offset="0.9198" stop-color="#6482be"/><stop offset="0.9236" stop-color="#667fc5"/><stop offset="0.9274" stop-color="#687dcc"/><stop offset="0.9312" stop-color="#6a7ad3"/><stop offset="0.9350" stop-color="#6c78d9"/><stop offset="0.9398" stop-color="#6e76e0"/><stop offset="0.9454" stop-color="#7073e7"/><stop offset="0.9682" stop-color="#7373e1"/><stop offset="0.9815" stop-color="#7474da"/><stop offset="0.9995" stop-color="#7474d5"/></linearGradient><linearGradient id="gh16" gradientUnits="userSpaceOnUse" x1="63" y1="0" x2="1117" y2="0"><stop offset="0.0005" stop-color="#808080"/><stop offset="0.3601" stop-color="#7e7e87"/><stop offset="0.3629" stop-color="#7d7d90"/><stop offset="0.3657" stop-color="#7c7c99"/><stop offset="0.3686" stop-color="#7b7ba0"/><stop offset="0.3724" stop-color="#7a7aa8"/><stop offset="0.3771" stop-color="#7979af"/><stop offset="0.3828" stop-color="#7979b5"/><stop offset="0.3904" stop-color="#7878bb"/><stop offset="0.3980" stop-color="#7777c2"/><stop offset="0.4046" stop-color="#7676c9"/><stop offset="0.4103" stop-color="#7575cf"/><stop offset="0.4170" stop-color="#7474d6"/><stop offset="0.4236" stop-color="#7474dd"/><stop offset="0.4322" stop-color="#7373e3"/><stop offset="0.4398" stop-color="#7272ea"/><stop offset="0.4540" stop-color="#6f75e3"/><stop offset="0.4625" stop-color="#6d77dd"/><stop offset="0.4701" stop-color="#6b79d6"/><stop offset="0.4777" stop-color="#697bd0"/><stop offset="0.4853" stop-color="#677dca"/><stop offset="0.4919" stop-color="#667fc4"/><stop offset="0.4976" stop-color="#6482be"/><stop offset="0.5033" stop-color="#6284b7"/><stop offset="0.5090" stop-color="#6086b0"/><stop offset="0.5138" stop-color="#5e88a9"/><stop offset="0.5185" stop-color="#5c8ba3"/><stop offset="0.5232" stop-color="#5a8d9c"/><stop offset="0.5280" stop-color="#589094"/><stop offset="0.5318" stop-color="#56928e"/><stop offset="0.5356" stop-color="#549487"/><stop offset="0.5394" stop-color="#529780"/><stop offset="0.5432" stop-color="#509979"/><stop offset="0.5470" stop-color="#4d9c71"/><stop offset="0.5508" stop-color="#4b9f6a"/><stop offset="0.5546" stop-color="#48a162"/><stop offset="0.5583" stop-color="#45a45b"/><stop offset="0.5621" stop-color="#43a753"/><stop offset="0.5650" stop-color="#40a94d"/><stop offset="0.5678" stop-color="#3eac47"/><stop offset="0.5707" stop-color="#3cae40"/><stop offset="0.5735" stop-color="#39b139"/><stop offset="0.5764" stop-color="#41ad3a"/><stop offset="0.5792" stop-color="#49a83c"/><stop offset="0.5821" stop-color="#52a43d"/><stop offset="0.5840" stop-color="#58a03e"/><stop offset="0.5859" stop-color="#5f9d3f"/><stop offset="0.5878" stop-color="#669941"/><stop offset="0.5897" stop-color="#6e9443"/><stop offset="0.5916" stop-color="#769044"/><stop offset="0.5935" stop-color="#7e8b46"/><stop offset="0.5954" stop-color="#868748"/><stop offset="0.5982" stop-color="#8e824b"/><stop offset="0.6001" stop-color="#947f4d"/><stop offset="0.6020" stop-color="#9d7a4f"/><stop offset="0.6039" stop-color="#a77452"/><stop offset="0.6058" stop-color="#b26e54"/><stop offset="0.6077" stop-color="#bc6956"/><stop offset="0.6096" stop-color="#c76357"/><stop offset="0.6115" stop-color="#d25d58"/><stop offset="0.6124" stop-color="#d85a59"/><stop offset="0.6153" stop-color="#d05f51"/><stop offset="0.6172" stop-color="#c96549"/><stop offset="0.6191" stop-color="#bc6d3d"/><stop offset="0.6200" stop-color="#b57336"/><stop offset="0.6210" stop-color="#ae772f"/><stop offset="0.6229" stop-color="#a37f23"/><stop offset="0.6238" stop-color="#9c841d"/><stop offset="0.6248" stop-color="#948a15"/><stop offset="0.6257" stop-color="#8e8e11"/><stop offset="0.6267" stop-color="#8c8c1c"/><stop offset="0.6276" stop-color="#8b8b27"/><stop offset="0.6286" stop-color="#898934"/><stop offset="0.6295" stop-color="#878745"/><stop offset="0.6305" stop-color="#868650"/><stop offset="0.6314" stop-color="#858558"/><stop offset="0.6333" stop-color="#838362"/><stop offset="0.6361" stop-color="#828269"/><stop offset="0.7064" stop-color="#828270"/><stop offset="0.7766" stop-color="#838368"/><stop offset="0.7794" stop-color="#84845f"/><stop offset="0.7813" stop-color="#858552"/><stop offset="0.7823" stop-color="#878747"/><stop offset="0.7832" stop-color="#898936"/><stop offset="0.7842" stop-color="#8b8b28"/><stop offset="0.7851" stop-color="#8c8c1e"/><stop offset="0.7861" stop-color="#8d8d13"/><stop offset="0.7880" stop-color="#9b851c"/><stop offset="0.7889" stop-color="#a28022"/><stop offset="0.7908" stop-color="#ad782d"/><stop offset="0.7927" stop-color="#ba6f3a"/><stop offset="0.7936" stop-color="#c06b40"/><stop offset="0.7955" stop-color="#cb634b"/><stop offset="0.7974" stop-color="#d15f51"/><stop offset="0.8003" stop-color="#d95a59"/><stop offset="0.8022" stop-color="#cf5f58"/><stop offset="0.8041" stop-color="#c56457"/><stop offset="0.8060" stop-color="#bc6956"/><stop offset="0.8079" stop-color="#b46d54"/><stop offset="0.8098" stop-color="#ab7252"/><stop offset="0.8117" stop-color="#a27751"/><stop offset="0.8136" stop-color="#9a7c4f"/><stop offset="0.8155" stop-color="#93804d"/><stop offset="0.8183" stop-color="#8b844a"/><stop offset="0.8212" stop-color="#858848"/><stop offset="0.8231" stop-color="#7f8b46"/><stop offset="0.8250" stop-color="#788f45"/><stop offset="0.8269" stop-color="#719243"/><stop offset="0.8287" stop-color="#6b9642"/><stop offset="0.8306" stop-color="#659941"/><stop offset="0.8335" stop-color="#5c9e3f"/><stop offset="0.8363" stop-color="#54a23d"/><stop offset="0.8392" stop-color="#4da63c"/><stop offset="0.8420" stop-color="#46aa3b"/><stop offset="0.8449" stop-color="#3fae3a"/><stop offset="0.8515" stop-color="#3cae42"/><stop offset="0.8553" stop-color="#3fab49"/><stop offset="0.8591" stop-color="#41a850"/><stop offset="0.8629" stop-color="#44a657"/><stop offset="0.8667" stop-color="#46a35e"/><stop offset="0.8705" stop-color="#49a164"/><stop offset="0.8743" stop-color="#4b9e6b"/><stop offset="0.8781" stop-color="#4d9c72"/><stop offset="0.8819" stop-color="#50997a"/><stop offset="0.8857" stop-color="#529780"/><stop offset="0.8895" stop-color="#549487"/><stop offset="0.8933" stop-color="#56928e"/><stop offset="0.8971" stop-color="#588f95"/><stop offset="0.9009" stop-color="#5a8d9b"/><stop offset="0.9046" stop-color="#5c8ba1"/><stop offset="0.9084" stop-color="#5e89a8"/><stop offset="0.9122" stop-color="#6086af"/><stop offset="0.9160" stop-color="#6284b7"/><stop offset="0.9198" stop-color="#6482be"/><stop offset="0.9236" stop-color="#667fc5"/><stop offset="0.9274" stop-color="#687dcc"/><stop offset="0.9312" stop-color="#6a7ad3"/><stop offset="0.9350" stop-color="#6c78d9"/><stop offset="0.9398" stop-color="#6e76e0"/><stop offset="0.9454" stop-color="#7073e7"/><stop offset="0.9682" stop-color="#7373e1"/><stop offset="0.9815" stop-color="#7474da"/><stop offset="0.9995" stop-color="#7474d5"/></linearGradient><linearGradient id="gh17" gradientUnits="userSpaceOnUse" x1="63" y1="0" x2="1117" y2="0"><stop offset="0.0005" stop-color="#808080"/><stop offset="0.3601" stop-color="#7e7e87"/><stop offset="0.3629" stop-color="#7d7d90"/><stop offset="0.3657" stop-color="#7c7c99"/><stop offset="0.3686" stop-color="#7b7ba0"/><stop offset="0.3724" stop-color="#7a7aa8"/><stop offset="0.3771" stop-color="#7979af"/><stop offset="0.3828" stop-color="#7979b5"/><stop offset="0.3904" stop-color="#7878bb"/><stop offset="0.3980" stop-color="#7777c2"/><stop offset="0.4046" stop-color="#7676c9"/><stop offset="0.4103" stop-color="#7575cf"/><stop offset="0.4170" stop-color="#7474d6"/><stop offset="0.4236" stop-color="#7474dd"/><stop offset="0.4322" stop-color="#7373e3"/><stop offset="0.4398" stop-color="#7272ea"/><stop offset="0.4540" stop-color="#6f75e3"/><stop offset="0.4625" stop-color="#6d77dd"/><stop offset="0.4701" stop-color="#6b79d6"/><stop offset="0.4777" stop-color="#697bd0"/><stop offset="0.4853" stop-color="#677dca"/><stop offset="0.4919" stop-color="#667fc4"/><stop offset="0.4976" stop-color="#6482be"/><stop offset="0.5033" stop-color="#6284b7"/><stop offset="0.5090" stop-color="#6086b0"/><stop offset="0.5138" stop-color="#5e88a9"/><stop offset="0.5185" stop-color="#5c8ba3"/><stop offset="0.5232" stop-color="#5a8d9c"/><stop offset="0.5280" stop-color="#589094"/><stop offset="0.5318" stop-color="#56928e"/><stop offset="0.5356" stop-color="#549487"/><stop offset="0.5394" stop-color="#529780"/><stop offset="0.5432" stop-color="#509979"/><stop offset="0.5470" stop-color="#4d9c71"/><stop offset="0.5508" stop-color="#4b9f6a"/><stop offset="0.5546" stop-color="#48a162"/><stop offset="0.5583" stop-color="#45a45b"/><stop offset="0.5621" stop-color="#43a753"/><stop offset="0.5650" stop-color="#40a94d"/><stop offset="0.5678" stop-color="#3eac47"/><stop offset="0.5707" stop-color="#3cae40"/><stop offset="0.5735" stop-color="#39b139"/><stop offset="0.5764" stop-color="#41ad3a"/><stop offset="0.5792" stop-color="#49a83c"/><stop offset="0.5821" stop-color="#52a43d"/><stop offset="0.5840" stop-color="#58a03e"/><stop offset="0.5859" stop-color="#5f9d3f"/><stop offset="0.5878" stop-color="#669941"/><stop offset="0.5897" stop-color="#6e9443"/><stop offset="0.5916" stop-color="#769044"/><stop offset="0.5935" stop-color="#7e8b46"/><stop offset="0.5954" stop-color="#868748"/><stop offset="0.5982" stop-color="#8e824b"/><stop offset="0.6001" stop-color="#947f4d"/><stop offset="0.6020" stop-color="#9d7a4f"/><stop offset="0.6039" stop-color="#a77452"/><stop offset="0.6058" stop-color="#b26e54"/><stop offset="0.6077" stop-color="#bc6956"/><stop offset="0.6096" stop-color="#c76357"/><stop offset="0.6115" stop-color="#d25d58"/><stop offset="0.6124" stop-color="#d85a59"/><stop offset="0.6153" stop-color="#d05f51"/><stop offset="0.6172" stop-color="#c96549"/><stop offset="0.6191" stop-color="#bc6d3d"/><stop offset="0.6200" stop-color="#b57336"/><stop offset="0.6210" stop-color="#ae772f"/><stop offset="0.6229" stop-color="#a37f23"/><stop offset="0.6238" stop-color="#9c841d"/><stop offset="0.6248" stop-color="#948a15"/><stop offset="0.6257" stop-color="#8e8e11"/><stop offset="0.6267" stop-color="#8c8c1c"/><stop offset="0.6276" stop-color="#8b8b27"/><stop offset="0.6286" stop-color="#898934"/><stop offset="0.6295" stop-color="#878745"/><stop offset="0.6305" stop-color="#868650"/><stop offset="0.6314" stop-color="#858558"/><stop offset="0.6333" stop-color="#838362"/><stop offset="0.6361" stop-color="#828269"/><stop offset="0.7064" stop-color="#828270"/><stop offset="0.7766" stop-color="#838368"/><stop offset="0.7794" stop-color="#84845f"/><stop offset="0.7813" stop-color="#858552"/><stop offset="0.7823" stop-color="#878747"/><stop offset="0.7832" stop-color="#898936"/><stop offset="0.7842" stop-color="#8b8b28"/><stop offset="0.7851" stop-color="#8c8c1e"/><stop offset="0.7861" stop-color="#8d8d13"/><stop offset="0.7880" stop-color="#9b851c"/><stop offset="0.7889" stop-color="#a28022"/><stop offset="0.7908" stop-color="#ad782d"/><stop offset="0.7927" stop-color="#ba6f3a"/><stop offset="0.7936" stop-color="#c06b40"/><stop offset="0.7955" stop-color="#cb634b"/><stop offset="0.7974" stop-color="#d15f51"/><stop offset="0.8003" stop-color="#d95a59"/><stop offset="0.8022" stop-color="#cf5f58"/><stop offset="0.8041" stop-color="#c56457"/><stop offset="0.8060" stop-color="#bc6956"/><stop offset="0.8079" stop-color="#b46d54"/><stop offset="0.8098" stop-color="#ab7252"/><stop offset="0.8117" stop-color="#a27751"/><stop offset="0.8136" stop-color="#9a7c4f"/><stop offset="0.8155" stop-color="#93804d"/><stop offset="0.8183" stop-color="#8b844a"/><stop offset="0.8212" stop-color="#858848"/><stop offset="0.8231" stop-color="#7f8b46"/><stop offset="0.8250" stop-color="#788f45"/><stop offset="0.8269" stop-color="#719243"/><stop offset="0.8287" stop-color="#6b9642"/><stop offset="0.8306" stop-color="#659941"/><stop offset="0.8335" stop-color="#5c9e3f"/><stop offset="0.8363" stop-color="#54a23d"/><stop offset="0.8392" stop-color="#4da63c"/><stop offset="0.8420" stop-color="#46aa3b"/><stop offset="0.8449" stop-color="#3fae3a"/><stop offset="0.8515" stop-color="#3cae42"/><stop offset="0.8553" stop-color="#3fab49"/><stop offset="0.8591" stop-color="#41a850"/><stop offset="0.8629" stop-color="#44a657"/><stop offset="0.8667" stop-color="#46a35e"/><stop offset="0.8705" stop-color="#49a164"/><stop offset="0.8743" stop-color="#4b9e6b"/><stop offset="0.8781" stop-color="#4d9c72"/><stop offset="0.8819" stop-color="#50997a"/><stop offset="0.8857" stop-color="#529780"/><stop offset="0.8895" stop-color="#549487"/><stop offset="0.8933" stop-color="#56928e"/><stop offset="0.8971" stop-color="#588f95"/><stop offset="0.9009" stop-color="#5a8d9b"/><stop offset="0.9046" stop-color="#5c8ba1"/><stop offset="0.9084" stop-color="#5e89a8"/><stop offset="0.9122" stop-color="#6086af"/><stop offset="0.9160" stop-color="#6284b7"/><stop offset="0.9198" stop-color="#6482be"/><stop offset="0.9236" stop-color="#667fc5"/><stop offset="0.9274" stop-color="#687dcc"/><stop offset="0.9312" stop-color="#6a7ad3"/><stop offset="0.9350" stop-color="#6c78d9"/><stop offset="0.9398" stop-color="#6e76e0"/><stop offset="0.9454" stop-color="#7073e7"/><stop offset="0.9682" stop-color="#7373e1"/><stop offset="0.9815" stop-color="#7474da"/><stop offset="0.9995" stop-color="#7474d5"/></linearGradient><linearGradient id="gh18" gradientUnits="userSpaceOnUse" x1="63" y1="0" x2="1117" y2="0"><stop offset="0.0005" stop-color="#808080"/><stop offset="0.3601" stop-color="#7e7e87"/><stop offset="0.3629" stop-color="#7d7d90"/><stop offset="0.3657" stop-color="#7c7c99"/><stop offset="0.3686" stop-color="#7b7ba0"/><stop offset="0.3724" stop-color="#7a7aa8"/><stop offset="0.3771" stop-color="#7979af"/><stop offset="0.3828" stop-color="#7979b5"/><stop offset="0.3904" stop-color="#7878bb"/><stop offset="0.3980" stop-color="#7777c2"/><stop offset="0.4046" stop-color="#7676c9"/><stop offset="0.4103" stop-color="#7575cf"/><stop offset="0.4170" stop-color="#7474d6"/><stop offset="0.4236" stop-color="#7474dd"/><stop offset="0.4322" stop-color="#7373e3"/><stop offset="0.4398" stop-color="#7272ea"/><stop offset="0.4540" stop-color="#6f75e3"/><stop offset="0.4625" stop-color="#6d77dd"/><stop offset="0.4701" stop-color="#6b79d6"/><stop offset="0.4777" stop-color="#697bd0"/><stop offset="0.4853" stop-color="#677dca"/><stop offset="0.4919" stop-color="#667fc4"/><stop offset="0.4976" stop-color="#6482be"/><stop offset="0.5033" stop-color="#6284b7"/><stop offset="0.5090" stop-color="#6086b0"/><stop offset="0.5138" stop-color="#5e88a9"/><stop offset="0.5185" stop-color="#5c8ba3"/><stop offset="0.5232" stop-color="#5a8d9c"/><stop offset="0.5280" stop-color="#589094"/><stop offset="0.5318" stop-color="#56928e"/><stop offset="0.5356" stop-color="#549487"/><stop offset="0.5394" stop-color="#529780"/><stop offset="0.5432" stop-color="#509979"/><stop offset="0.5470" stop-color="#4d9c71"/><stop offset="0.5508" stop-color="#4b9f6a"/><stop offset="0.5546" stop-color="#48a162"/><stop offset="0.5583" stop-color="#45a45b"/><stop offset="0.5621" stop-color="#43a753"/><stop offset="0.5650" stop-color="#40a94d"/><stop offset="0.5678" stop-color="#3eac47"/><stop offset="0.5707" stop-color="#3cae40"/><stop offset="0.5735" stop-color="#39b139"/><stop offset="0.5764" stop-color="#41ad3a"/><stop offset="0.5792" stop-color="#49a83c"/><stop offset="0.5821" stop-color="#52a43d"/><stop offset="0.5840" stop-color="#58a03e"/><stop offset="0.5859" stop-color="#5f9d3f"/><stop offset="0.5878" stop-color="#669941"/><stop offset="0.5897" stop-color="#6e9443"/><stop offset="0.5916" stop-color="#769044"/><stop offset="0.5935" stop-color="#7e8b46"/><stop offset="0.5954" stop-color="#868748"/><stop offset="0.5982" stop-color="#8e824b"/><stop offset="0.6001" stop-color="#947f4d"/><stop offset="0.6020" stop-color="#9d7a4f"/><stop offset="0.6039" stop-color="#a77452"/><stop offset="0.6058" stop-color="#b26e54"/><stop offset="0.6077" stop-color="#bc6956"/><stop offset="0.6096" stop-color="#c76357"/><stop offset="0.6115" stop-color="#d25d58"/><stop offset="0.6124" stop-color="#d85a59"/><stop offset="0.6153" stop-color="#d05f51"/><stop offset="0.6172" stop-color="#c96549"/><stop offset="0.6191" stop-color="#bc6d3d"/><stop offset="0.6200" stop-color="#b57336"/><stop offset="0.6210" stop-color="#ae772f"/><stop offset="0.6229" stop-color="#a37f23"/><stop offset="0.6238" stop-color="#9c841d"/><stop offset="0.6248" stop-color="#948a15"/><stop offset="0.6257" stop-color="#8e8e11"/><stop offset="0.6267" stop-color="#8c8c1c"/><stop offset="0.6276" stop-color="#8b8b27"/><stop offset="0.6286" stop-color="#898934"/><stop offset="0.6295" stop-color="#878745"/><stop offset="0.6305" stop-color="#868650"/><stop offset="0.6314" stop-color="#858558"/><stop offset="0.6333" stop-color="#838362"/><stop offset="0.6361" stop-color="#828269"/><stop offset="0.7064" stop-color="#828270"/><stop offset="0.7766" stop-color="#838368"/><stop offset="0.7794" stop-color="#84845f"/><stop offset="0.7813" stop-color="#858552"/><stop offset="0.7823" stop-color="#878747"/><stop offset="0.7832" stop-color="#898936"/><stop offset="0.7842" stop-color="#8b8b28"/><stop offset="0.7851" stop-color="#8c8c1e"/><stop offset="0.7861" stop-color="#8d8d13"/><stop offset="0.7880" stop-color="#9b851c"/><stop offset="0.7889" stop-color="#a28022"/><stop offset="0.7908" stop-color="#ad782d"/><stop offset="0.7927" stop-color="#ba6f3a"/><stop offset="0.7936" stop-color="#c06b40"/><stop offset="0.7955" stop-color="#cb634b"/><stop offset="0.7974" stop-color="#d15f51"/><stop offset="0.8003" stop-color="#d95a59"/><stop offset="0.8022" stop-color="#cf5f58"/><stop offset="0.8041" stop-color="#c56457"/><stop offset="0.8060" stop-color="#bc6956"/><stop offset="0.8079" stop-color="#b46d54"/><stop offset="0.8098" stop-color="#ab7252"/><stop offset="0.8117" stop-color="#a27751"/><stop offset="0.8136" stop-color="#9a7c4f"/><stop offset="0.8155" stop-color="#93804d"/><stop offset="0.8183" stop-color="#8b844a"/><stop offset="0.8212" stop-color="#858848"/><stop offset="0.8231" stop-color="#7f8b46"/><stop offset="0.8250" stop-color="#788f45"/><stop offset="0.8269" stop-color="#719243"/><stop offset="0.8287" stop-color="#6b9642"/><stop offset="0.8306" stop-color="#659941"/><stop offset="0.8335" stop-color="#5c9e3f"/><stop offset="0.8363" stop-color="#54a23d"/><stop offset="0.8392" stop-color="#4da63c"/><stop offset="0.8420" stop-color="#46aa3b"/><stop offset="0.8449" stop-color="#3fae3a"/><stop offset="0.8515" stop-color="#3cae42"/><stop offset="0.8553" stop-color="#3fab49"/><stop offset="0.8591" stop-color="#41a850"/><stop offset="0.8629" stop-color="#44a657"/><stop offset="0.8667" stop-color="#46a35e"/><stop offset="0.8705" stop-color="#49a164"/><stop offset="0.8743" stop-color="#4b9e6b"/><stop offset="0.8781" stop-color="#4d9c72"/><stop offset="0.8819" stop-color="#50997a"/><stop offset="0.8857" stop-color="#529780"/><stop offset="0.8895" stop-color="#549487"/><stop offset="0.8933" stop-color="#56928e"/><stop offset="0.8971" stop-color="#588f95"/><stop offset="0.9009" stop-color="#5a8d9b"/><stop offset="0.9046" stop-color="#5c8ba1"/><stop offset="0.9084" stop-color="#5e89a8"/><stop offset="0.9122" stop-color="#6086af"/><stop offset="0.9160" stop-color="#6284b7"/><stop offset="0.9198" stop-color="#6482be"/><stop offset="0.9236" stop-color="#667fc5"/><stop offset="0.9274" stop-color="#687dcc"/><stop offset="0.9312" stop-color="#6a7ad3"/><stop offset="0.9350" stop-color="#6c78d9"/><stop offset="0.9398" stop-color="#6e76e0"/><stop offset="0.9454" stop-color="#7073e7"/><stop offset="0.9682" stop-color="#7373e1"/><stop offset="0.9815" stop-color="#7474da"/><stop offset="0.9995" stop-color="#7474d5"/></linearGradient><linearGradient id="gh19" gradientUnits="userSpaceOnUse" x1="63" y1="0" x2="1117" y2="0"><stop offset="0.0005" stop-color="#808080"/><stop offset="0.3601" stop-color="#7e7e87"/><stop offset="0.3629" stop-color="#7d7d90"/><stop offset="0.3657" stop-color="#7c7c99"/><stop offset="0.3686" stop-color="#7b7ba0"/><stop offset="0.3724" stop-color="#7a7aa8"/><stop offset="0.3771" stop-color="#7979af"/><stop offset="0.3828" stop-color="#7979b5"/><stop offset="0.3904" stop-color="#7878bb"/><stop offset="0.3980" stop-color="#7777c2"/><stop offset="0.4046" stop-color="#7676c9"/><stop offset="0.4103" stop-color="#7575cf"/><stop offset="0.4170" stop-color="#7474d6"/><stop offset="0.4236" stop-color="#7474dd"/><stop offset="0.4322" stop-color="#7373e3"/><stop offset="0.4398" stop-color="#7272ea"/><stop offset="0.4540" stop-color="#6f75e3"/><stop offset="0.4625" stop-color="#6d77dd"/><stop offset="0.4701" stop-color="#6b79d6"/><stop offset="0.4777" stop-color="#697bd0"/><stop offset="0.4853" stop-color="#677dca"/><stop offset="0.4919" stop-color="#667fc4"/><stop offset="0.4976" stop-color="#6482be"/><stop offset="0.5033" stop-color="#6284b7"/><stop offset="0.5090" stop-color="#6086b0"/><stop offset="0.5138" stop-color="#5e88a9"/><stop offset="0.5185" stop-color="#5c8ba3"/><stop offset="0.5232" stop-color="#5a8d9c"/><stop offset="0.5280" stop-color="#589094"/><stop offset="0.5318" stop-color="#56928e"/><stop offset="0.5356" stop-color="#549487"/><stop offset="0.5394" stop-color="#529780"/><stop offset="0.5432" stop-color="#509979"/><stop offset="0.5470" stop-color="#4d9c71"/><stop offset="0.5508" stop-color="#4b9f6a"/><stop offset="0.5546" stop-color="#48a162"/><stop offset="0.5583" stop-color="#45a45b"/><stop offset="0.5621" stop-color="#43a753"/><stop offset="0.5650" stop-color="#40a94d"/><stop offset="0.5678" stop-color="#3eac47"/><stop offset="0.5707" stop-color="#3cae40"/><stop offset="0.5735" stop-color="#39b139"/><stop offset="0.5764" stop-color="#41ad3a"/><stop offset="0.5792" stop-color="#49a83c"/><stop offset="0.5821" stop-color="#52a43d"/><stop offset="0.5840" stop-color="#58a03e"/><stop offset="0.5859" stop-color="#5f9d3f"/><stop offset="0.5878" stop-color="#669941"/><stop offset="0.5897" stop-color="#6e9443"/><stop offset="0.5916" stop-color="#769044"/><stop offset="0.5935" stop-color="#7e8b46"/><stop offset="0.5954" stop-color="#868748"/><stop offset="0.5982" stop-color="#8e824b"/><stop offset="0.6001" stop-color="#947f4d"/><stop offset="0.6020" stop-color="#9d7a4f"/><stop offset="0.6039" stop-color="#a77452"/><stop offset="0.6058" stop-color="#b26e54"/><stop offset="0.6077" stop-color="#bc6956"/><stop offset="0.6096" stop-color="#c76357"/><stop offset="0.6115" stop-color="#d25d58"/><stop offset="0.6124" stop-color="#d85a59"/><stop offset="0.6153" stop-color="#d05f51"/><stop offset="0.6172" stop-color="#c96549"/><stop offset="0.6191" stop-color="#bc6d3d"/><stop offset="0.6200" stop-color="#b57236"/><stop offset="0.6210" stop-color="#ae772f"/><stop offset="0.6229" stop-color="#a37f23"/><stop offset="0.6238" stop-color="#9c841d"/><stop offset="0.6248" stop-color="#948a15"/><stop offset="0.6257" stop-color="#8e8e11"/><stop offset="0.6267" stop-color="#8c8c1c"/><stop offset="0.6276" stop-color="#8b8b27"/><stop offset="0.6286" stop-color="#898934"/><stop offset="0.6295" stop-color="#878745"/><stop offset="0.6305" stop-color="#868650"/><stop offset="0.6314" stop-color="#858558"/><stop offset="0.6333" stop-color="#838362"/><stop offset="0.6361" stop-color="#828269"/><stop offset="0.7064" stop-color="#828270"/><stop offset="0.7766" stop-color="#838368"/><stop offset="0.7794" stop-color="#84845f"/><stop offset="0.7813" stop-color="#858551"/><stop offset="0.7823" stop-color="#878746"/><stop offset="0.7832" stop-color="#898936"/><stop offset="0.7842" stop-color="#8b8b28"/><stop offset="0.7851" stop-color="#8c8c1e"/><stop offset="0.7861" stop-color="#8d8d13"/><stop offset="0.7880" stop-color="#9b851c"/><stop offset="0.7889" stop-color="#a28022"/><stop offset="0.7908" stop-color="#ad782d"/><stop offset="0.7927" stop-color="#ba6f3a"/><stop offset="0.7936" stop-color="#c06b40"/><stop offset="0.7955" stop-color="#cb634b"/><stop offset="0.7974" stop-color="#d15f51"/><stop offset="0.8003" stop-color="#d95a59"/><stop offset="0.8022" stop-color="#cf5f58"/><stop offset="0.8041" stop-color="#c56457"/><stop offset="0.8060" stop-color="#bc6956"/><stop offset="0.8079" stop-color="#b46d54"/><stop offset="0.8098" stop-color="#ab7252"/><stop offset="0.8117" stop-color="#a27751"/><stop offset="0.8136" stop-color="#9a7c4f"/><stop offset="0.8155" stop-color="#93804d"/><stop offset="0.8183" stop-color="#8b844a"/><stop offset="0.8212" stop-color="#858848"/><stop offset="0.8231" stop-color="#7f8b46"/><stop offset="0.8250" stop-color="#788f45"/><stop offset="0.8269" stop-color="#719243"/><stop offset="0.8287" stop-color="#6b9642"/><stop offset="0.8306" stop-color="#659941"/><stop offset="0.8335" stop-color="#5c9e3f"/><stop offset="0.8363" stop-color="#54a23d"/><stop offset="0.8392" stop-color="#4da63c"/><stop offset="0.8420" stop-color="#46aa3b"/><stop offset="0.8449" stop-color="#3fae3a"/><stop offset="0.8515" stop-color="#3cae42"/><stop offset="0.8553" stop-color="#3fab49"/><stop offset="0.8591" stop-color="#41a850"/><stop offset="0.8629" stop-color="#44a657"/><stop offset="0.8667" stop-color="#46a35e"/><stop offset="0.8705" stop-color="#49a164"/><stop offset="0.8743" stop-color="#4b9e6b"/><stop offset="0.8781" stop-color="#4d9c72"/><stop offset="0.8819" stop-color="#50997a"/><stop offset="0.8857" stop-color="#529780"/><stop offset="0.8895" stop-color="#549487"/><stop offset="0.8933" stop-color="#56928e"/><stop offset="0.8971" stop-color="#588f95"/><stop offset="0.9009" stop-color="#5a8d9b"/><stop offset="0.9046" stop-color="#5c8ba1"/><stop offset="0.9084" stop-color="#5e89a8"/><stop offset="0.9122" stop-color="#6086af"/><stop offset="0.9160" stop-color="#6284b7"/><stop offset="0.9198" stop-color="#6482be"/><stop offset="0.9236" stop-color="#667fc5"/><stop offset="0.9274" stop-color="#687dcc"/><stop offset="0.9312" stop-color="#6a7ad3"/><stop offset="0.9350" stop-color="#6c78d9"/><stop offset="0.9398" stop-color="#6e76e0"/><stop offset="0.9454" stop-color="#7073e7"/><stop offset="0.9682" stop-color="#7373e1"/><stop offset="0.9815" stop-color="#7474da"/><stop offset="0.9995" stop-color="#7474d5"/></linearGradient><linearGradient id="gh20" gradientUnits="userSpaceOnUse" x1="63" y1="0" x2="1117" y2="0"><stop offset="0.0005" stop-color="#808080"/><stop offset="0.4843" stop-color="#7f7f86"/><stop offset="0.4929" stop-color="#7e7e8c"/><stop offset="0.5014" stop-color="#7d7d93"/><stop offset="0.5081" stop-color="#7c7c99"/><stop offset="0.5166" stop-color="#7b7b9f"/><stop offset="0.5251" stop-color="#7b7ba5"/><stop offset="0.5346" stop-color="#7a7aac"/><stop offset="0.5413" stop-color="#7979b2"/><stop offset="0.5479" stop-color="#7878b8"/><stop offset="0.5555" stop-color="#7777bf"/><stop offset="0.5631" stop-color="#7777c5"/><stop offset="0.5707" stop-color="#7676cb"/><stop offset="0.5783" stop-color="#7575d1"/><stop offset="0.5868" stop-color="#7474d8"/><stop offset="0.5944" stop-color="#7373de"/><stop offset="0.6010" stop-color="#7272e5"/><stop offset="0.6067" stop-color="#7272eb"/><stop offset="0.6124" stop-color="#6f74e5"/><stop offset="0.6162" stop-color="#6d77dd"/><stop offset="0.6191" stop-color="#6b79d5"/><stop offset="0.6210" stop-color="#687ccd"/><stop offset="0.6229" stop-color="#6580c3"/><stop offset="0.6238" stop-color="#6482bc"/><stop offset="0.6248" stop-color="#6284b5"/><stop offset="0.6257" stop-color="#5f87ae"/><stop offset="0.6267" stop-color="#5d89a6"/><stop offset="0.6276" stop-color="#5b8c9e"/><stop offset="0.6286" stop-color="#598f97"/><stop offset="0.6295" stop-color="#579190"/><stop offset="0.6305" stop-color="#559389"/><stop offset="0.6314" stop-color="#539683"/><stop offset="0.6333" stop-color="#4f9979"/><stop offset="0.6352" stop-color="#4d9c71"/><stop offset="0.6380" stop-color="#4b9f69"/><stop offset="0.6466" stop-color="#48a163"/><stop offset="0.7737" stop-color="#4b9f69"/><stop offset="0.7766" stop-color="#4d9c71"/><stop offset="0.7785" stop-color="#4f9979"/><stop offset="0.7804" stop-color="#539683"/><stop offset="0.7813" stop-color="#559389"/><stop offset="0.7823" stop-color="#579190"/><stop offset="0.7832" stop-color="#598f97"/><stop offset="0.7842" stop-color="#5b8c9f"/><stop offset="0.7851" stop-color="#5d89a7"/><stop offset="0.7861" stop-color="#6087af"/><stop offset="0.7870" stop-color="#6284b6"/><stop offset="0.7880" stop-color="#6481be"/><stop offset="0.7889" stop-color="#667fc5"/><stop offset="0.7908" stop-color="#697bd0"/><stop offset="0.7927" stop-color="#6c78d8"/><stop offset="0.7946" stop-color="#6e76df"/><stop offset="0.7974" stop-color="#7074e6"/><stop offset="0.8088" stop-color="#7373df"/><stop offset="0.8136" stop-color="#7474d9"/><stop offset="0.8193" stop-color="#7575d2"/><stop offset="0.8240" stop-color="#7676cc"/><stop offset="0.8287" stop-color="#7777c5"/><stop offset="0.8335" stop-color="#7777bf"/><stop offset="0.8382" stop-color="#7878b8"/><stop offset="0.8430" stop-color="#7979b1"/><stop offset="0.8477" stop-color="#7a7aab"/><stop offset="0.8534" stop-color="#7b7ba5"/><stop offset="0.8591" stop-color="#7c7c9e"/><stop offset="0.8648" stop-color="#7c7c98"/><stop offset="0.8695" stop-color="#7d7d91"/><stop offset="0.8762" stop-color="#7e7e8a"/><stop offset="0.8819" stop-color="#7f7f84"/><stop offset="0.9995" stop-color="#808080"/></linearGradient><linearGradient id="gh21" gradientUnits="userSpaceOnUse" x1="63" y1="0" x2="1117" y2="0"><stop offset="0.0005" stop-color="#808080"/><stop offset="0.5574" stop-color="#7f7f86"/><stop offset="0.5678" stop-color="#7e7e8c"/><stop offset="0.5783" stop-color="#7d7d93"/><stop offset="0.5868" stop-color="#7c7c9a"/><stop offset="0.5972" stop-color="#7b7ba0"/><stop offset="0.6086" stop-color="#7b7ba6"/><stop offset="0.6181" stop-color="#7a7aac"/><stop offset="0.6210" stop-color="#7979b2"/><stop offset="0.6229" stop-color="#7878b9"/><stop offset="0.6248" stop-color="#7777c0"/><stop offset="0.6267" stop-color="#7676c9"/><stop offset="0.6286" stop-color="#7575d2"/><stop offset="0.6305" stop-color="#7474d8"/><stop offset="0.6333" stop-color="#7373e0"/><stop offset="0.6371" stop-color="#7272e6"/><stop offset="0.7785" stop-color="#7373e0"/><stop offset="0.7813" stop-color="#7474d8"/><stop offset="0.7832" stop-color="#7575d1"/><stop offset="0.7851" stop-color="#7676c8"/><stop offset="0.7870" stop-color="#7777bf"/><stop offset="0.7889" stop-color="#7878b7"/><stop offset="0.7908" stop-color="#7979b0"/><stop offset="0.7936" stop-color="#7a7aaa"/><stop offset="0.7993" stop-color="#7b7ba3"/><stop offset="0.8069" stop-color="#7c7c9d"/><stop offset="0.8136" stop-color="#7c7c97"/><stop offset="0.8193" stop-color="#7d7d90"/><stop offset="0.8269" stop-color="#7e7e89"/><stop offset="0.8335" stop-color="#7f7f83"/><stop offset="0.9995" stop-color="#808080"/></linearGradient><linearGradient id="gh22" gradientUnits="userSpaceOnUse" x1="63" y1="0" x2="1117" y2="0"><stop offset="0.0005" stop-color="#808080"/><stop offset="0.6305" stop-color="#7e7e88"/><stop offset="0.6333" stop-color="#7d7d90"/><stop offset="0.6361" stop-color="#7c7c97"/><stop offset="0.6456" stop-color="#7c7c9d"/><stop offset="0.7756" stop-color="#7c7c97"/><stop offset="0.7785" stop-color="#7d7d90"/><stop offset="0.7813" stop-color="#7e7e88"/><stop offset="0.7832" stop-color="#7f7f81"/><stop offset="0.9995" stop-color="#808080"/></linearGradient><clipPath id="hc"><rect x="63" y="31" width="1054" height="729"/></clipPath></defs>
<g clip-path="url(#hc)"><rect x="63" y="31" width="1054" height="729" fill="#000000"/><g transform="translate(63.5,31.5)">
<rect x="0" y="0" width="1054" height="729" fill="#000000"/>
<path fill="#000009" d="M677,0 672,2 669,5 663,15 660,26 656,34 646,44 629,53 603,70 549,112 532,127 496,163 475,188 466,191 455,191 454,192 386,193 381,194 378,196 378,515 380,517 386,519 418,520 419,521 434,521 435,522 456,523 457,524 463,524 471,527 484,545 496,559 532,595 549,610 603,652 629,669 646,678 656,688 660,696 665,711 669,717 674,721 677,722 810,722 815,720 822,711 829,690 836,679 878,637 914,592 933,564 943,547 950,532 953,529 966,526 993,525 994,524 1053,524 1053,211 1028,211 1027,210 992,209 991,208 981,208 980,207 973,207 957,204 953,200 953,196 943,175 919,137 902,114 878,85 836,43 829,32 822,11 815,2 810,0Z"/>
<path fill="#00000f" d="M677,2 672,4 664,14 660,28 650,44 618,63 599,76 553,112 510,152 479,188 474,190 458,191 457,192 388,193 387,194 382,194 379,196 379,516 387,519 436,521 437,522 458,523 473,526 478,531 491,549 510,570 546,604 599,646 618,659 650,678 660,694 664,708 668,714 674,719 677,720 810,720 815,718 823,708 826,696 835,677 876,636 910,594 933,560 947,533 951,529 964,526 990,525 991,524 1053,524 1053,212 1051,211 1027,211 1026,210 1007,210 1006,209 980,208 979,207 959,205 952,202 949,192 940,174 922,145 904,120 883,94 865,74 835,45 826,26 823,14 815,4 810,2Z"/>
<path fill="#000015" d="M676,4 670,7 666,12 659,32 656,36 654,42 649,48 631,58 605,75 557,112 528,138 509,157 483,188 478,190 461,191 460,192 390,193 380,196 379,200 379,512 381,517 388,519 450,522 451,523 460,523 461,524 473,525 478,527 493,547 509,565 550,604 578,627 605,647 631,664 649,674 654,680 656,686 659,690 666,710 673,717 676,718 811,718 817,715 821,710 826,694 835,674 874,635 899,605 926,567 937,549 945,532 948,529 963,526 988,525 989,524 1053,524 1053,212 990,209 989,208 963,206 951,203 948,199 947,193 937,173 911,133 874,87 835,48 826,28 822,14 817,7 811,4Z"/>
<path fill="#00001b" d="M676,6 671,8 666,14 656,41 652,48 648,52 628,63 604,79 560,113 532,138 511,159 487,188 482,190 465,191 464,192 393,193 392,194 385,194 381,196 380,198 380,514 382,517 390,519 452,522 453,523 470,524 482,527 496,546 511,563 553,603 581,626 604,643 628,659 648,670 652,674 656,681 666,708 673,715 676,716 811,716 816,714 821,708 831,679 835,671 870,636 897,604 926,563 935,548 942,533 946,529 961,526 986,525 987,524 1053,523 1053,212 989,209 988,208 962,206 949,203 946,200 944,192 935,174 909,134 889,108 870,86 835,51 825,27 822,16 816,8 811,6Z"/>
<path fill="#000021" d="M675,8 672,9 667,14 659,34 657,42 653,50 648,55 627,67 606,81 562,115 535,139 515,159 489,189 480,191 446,192 445,193 399,193 398,194 386,194 382,196 381,198 381,514 383,517 392,519 455,522 465,524 474,524 486,527 499,545 515,563 555,601 583,624 606,641 627,655 648,667 653,672 657,680 666,706 672,713 675,714 812,714 815,713 820,708 832,673 836,666 866,637 891,608 924,562 934,545 940,532 943,529 952,527 959,527 960,526 984,525 985,524 1053,523 1053,212 987,209 986,208 961,206 945,202 934,177 907,135 875,95 836,56 832,49 821,16 815,9 812,8Z"/>
<path fill="#000027" d="M674,10 669,13 659,36 656,48 654,52 647,59 629,69 608,83 564,117 536,142 519,159 493,189 485,191 452,192 451,193 388,194 383,196 382,199 382,513 383,516 395,519 431,520 432,521 478,524 488,526 519,563 557,599 585,622 608,639 629,653 647,663 654,670 656,674 659,686 669,709 674,712 813,712 818,709 822,701 828,685 831,672 836,663 871,628 899,594 920,564 939,530 949,527 982,525 983,524 1053,523 1053,212 986,209 985,208 967,207 966,206 960,206 944,203 941,200 938,190 928,171 902,132 871,94 836,59 831,50 828,37 822,21 818,13 813,10Z"/>
<path fill="#00002d" d="M677,11 673,12 669,15 661,33 656,51 654,55 647,62 611,84 562,122 543,139 519,163 497,189 490,191 457,192 456,193 390,194 386,195 384,197 383,200 383,512 384,516 389,518 459,522 460,523 488,525 493,527 519,559 543,583 562,600 604,633 626,648 647,660 654,667 658,676 660,686 669,707 673,710 677,711 810,711 814,710 818,707 824,694 828,678 835,661 869,627 891,601 920,560 929,545 935,532 938,529 947,527 980,525 981,524 1053,523 1053,212 985,209 984,208 975,208 974,207 951,205 940,202 929,177 906,141 877,104 835,61 831,53 824,28 818,15 816,13 810,11Z"/>
<path fill="#000033" d="M673,13 669,17 661,34 657,51 652,60 646,65 636,70 610,87 566,121 549,136 517,168 500,189 493,191 481,191 480,192 433,193 432,194 392,194 385,196 384,198 384,514 385,516 390,518 473,523 474,524 490,525 496,527 517,554 549,586 566,601 610,635 636,652 646,657 652,662 657,671 661,688 669,705 673,709 678,709 679,710 808,710 809,709 814,709 818,705 826,687 828,676 835,659 867,627 893,596 917,562 936,529 945,527 979,525 980,524 1053,523 1053,212 984,209 983,208 965,207 964,206 940,203 937,200 936,195 925,173 902,138 867,95 835,63 831,55 823,27 818,17 814,13 809,13 808,12 679,12 678,13Z"/>
<path fill="#000039" d="M674,14 669,19 662,33 657,53 653,61 643,69 630,76 609,90 569,121 553,135 518,170 502,189 496,191 486,191 485,192 436,193 435,194 394,194 386,196 385,198 385,514 386,516 392,518 476,523 477,524 493,525 498,527 518,552 562,595 602,627 630,646 643,653 653,661 657,669 662,689 669,703 674,708 813,708 818,703 822,696 826,685 830,667 837,654 863,629 891,596 912,567 926,544 933,530 943,527 978,525 979,524 1053,523 1053,212 1033,212 1032,211 983,209 982,208 942,204 937,202 935,200 933,192 926,178 903,142 872,103 837,68 833,62 829,52 826,37 822,26 818,19 813,14Z"/>
<path fill="#00003f" d="M677,15 671,18 668,22 662,35 658,53 655,60 650,67 615,89 573,121 530,161 506,189 499,191 490,191 489,192 439,193 438,194 397,194 387,196 386,198 386,514 387,516 393,518 478,523 479,524 489,524 502,527 514,543 530,561 566,595 601,623 627,641 645,651 650,655 655,662 658,669 663,690 670,703 674,706 677,707 810,707 817,703 824,690 831,662 838,650 860,629 893,590 914,560 931,530 941,527 977,525 978,524 1053,523 1053,212 1031,212 1030,211 983,209 982,208 947,205 935,202 932,198 931,193 923,177 899,140 870,104 838,72 834,66 828,51 824,32 817,19 813,16 810,15Z"/>
<path fill="#000046" d="M677,17 672,19 668,24 663,34 657,58 651,69 645,74 632,81 604,100 570,127 530,165 510,189 502,191 494,191 493,192 442,193 441,194 402,194 401,195 391,195 387,198 387,514 388,516 395,518 426,519 427,520 454,521 455,522 466,522 467,523 481,523 482,524 492,524 505,527 530,557 570,595 604,622 632,641 645,648 651,653 657,664 663,688 670,701 674,704 677,705 810,705 817,701 824,688 828,669 835,651 868,617 888,593 914,556 926,533 930,529 939,527 976,525 977,524 1053,523 1053,213 1052,212 1029,212 1028,211 982,209 981,208 946,205 933,202 930,199 929,194 920,176 900,145 868,105 835,71 828,53 824,34 819,24 815,19 810,17Z"/>
<path fill="#00004c" d="M677,19 672,21 669,24 664,33 660,51 656,63 651,72 642,79 634,83 610,99 573,128 555,144 532,167 513,189 507,191 498,191 497,192 393,195 388,198 388,514 392,517 397,518 428,519 429,520 455,521 456,522 468,522 469,523 484,523 485,524 502,525 509,527 532,555 566,588 610,623 626,634 642,643 651,650 656,659 664,689 669,698 674,702 677,703 810,703 815,701 818,698 823,689 829,663 833,652 837,645 866,616 890,587 909,560 926,530 938,527 975,525 976,524 1053,523 1053,213 1050,212 1027,212 1026,211 981,209 971,207 944,205 930,202 928,200 926,193 914,170 893,139 866,106 835,74 829,59 823,33 820,27 815,21 810,19Z"/>
<path fill="#000052" d="M676,21 673,22 668,27 664,35 659,57 652,74 647,79 631,88 609,103 576,129 559,144 534,169 517,189 511,191 502,191 501,192 395,195 390,197 389,200 389,512 391,516 400,518 415,518 416,519 430,519 431,520 442,520 443,521 487,523 488,524 506,525 513,527 534,553 569,587 609,619 631,634 647,643 652,648 659,665 664,687 668,695 673,700 676,701 811,701 814,700 819,695 823,687 828,664 835,645 863,616 888,586 909,556 921,533 925,529 935,528 936,527 945,527 946,526 992,524 993,523 1045,523 1046,522 1053,522 1053,213 980,209 970,207 943,205 928,202 925,199 924,194 915,176 894,144 871,115 835,77 828,58 823,35 819,27 814,22 811,21Z"/>
<path fill="#000058" d="M676,23 673,24 665,34 658,63 652,77 647,82 615,102 579,130 562,145 537,170 521,189 516,191 507,191 506,192 398,195 393,196 391,198 391,514 395,517 402,517 403,518 418,518 419,519 432,519 433,520 444,520 445,521 501,524 502,525 514,526 518,528 537,552 572,586 604,612 633,632 647,640 652,645 658,659 665,688 673,698 676,699 811,699 814,698 822,688 830,654 836,640 859,617 883,589 907,555 921,530 933,527 973,525 974,524 989,524 990,523 1053,522 1053,213 979,209 978,208 934,204 924,201 913,177 895,149 868,115 836,82 830,68 822,34 814,24 811,23Z"/>
<path fill="#00005e" d="M675,25 671,27 666,34 658,66 653,79 646,86 635,92 610,109 575,137 540,171 525,189 520,191 513,191 512,192 403,195 402,196 396,196 393,198 393,515 398,517 406,517 407,518 421,518 422,519 434,519 435,520 446,520 447,521 504,524 505,525 518,526 522,528 540,551 575,585 610,613 635,630 646,636 653,643 658,656 666,688 670,694 675,697 812,697 816,695 821,688 830,651 836,637 865,607 881,588 905,554 916,533 920,529 930,528 931,527 941,527 942,526 957,526 958,525 988,524 989,523 1053,522 1053,213 989,210 988,209 978,209 968,207 940,205 939,204 932,204 923,202 920,199 919,194 911,178 893,150 865,115 836,85 830,71 821,34 817,28 812,25Z"/>
<path fill="#000064" d="M675,27 671,29 667,34 660,58 658,69 655,78 651,85 645,90 616,108 584,133 567,148 543,172 529,189 517,192 410,195 409,196 398,196 395,198 394,200 394,513 395,515 401,517 449,520 450,521 463,521 464,522 508,524 524,527 543,550 577,583 616,614 645,632 651,637 655,644 658,653 660,664 667,688 671,693 675,695 812,695 816,693 820,688 830,648 834,637 838,631 862,607 886,578 900,558 916,530 928,527 986,524 987,523 1053,522 1053,213 988,210 987,209 978,209 977,208 931,204 919,201 917,195 905,172 886,144 862,115 838,91 834,85 830,74 820,34 816,29 812,27Z"/>
<path fill="#00006a" d="M679,28 672,30 668,34 662,53 658,72 653,85 645,93 619,109 582,138 543,176 531,190 521,192 503,192 502,193 466,193 465,194 417,195 416,196 402,196 397,198 396,200 396,513 397,515 404,517 426,518 427,519 437,519 438,520 451,520 452,521 465,521 466,522 511,524 512,525 520,525 528,527 543,546 574,577 604,602 637,625 645,629 653,637 658,650 662,669 668,688 674,693 679,694 808,694 815,692 819,688 827,661 830,645 834,634 838,628 862,604 882,580 899,556 912,532 915,529 925,528 926,527 984,524 985,523 1053,522 1053,213 987,210 986,209 929,204 917,201 909,183 888,150 869,126 838,94 834,88 830,77 827,61 819,34 813,29 808,28Z"/>
<path fill="#000070" d="M675,30 671,32 668,36 662,55 657,78 652,89 647,94 624,108 591,133 576,146 546,176 534,190 525,192 509,192 508,193 468,193 467,194 421,195 420,196 405,196 399,198 398,200 398,513 399,515 407,517 428,518 429,519 439,519 440,520 453,520 454,521 466,521 467,522 514,524 515,525 528,526 532,528 546,546 576,576 610,604 633,620 647,628 652,633 657,644 662,667 668,686 671,690 675,692 812,692 816,690 819,686 826,663 829,646 835,630 856,608 880,580 899,553 912,530 924,527 968,525 969,524 983,524 984,523 1053,522 1053,213 1035,213 1034,212 987,210 986,209 976,209 975,208 966,208 956,206 927,204 915,201 906,181 886,150 865,124 835,92 831,83 827,68 826,59 819,36 816,32 812,30Z"/>
<path fill="#000076" d="M677,31 673,32 670,35 667,41 662,57 658,77 653,90 646,97 619,114 586,140 549,176 537,190 529,192 514,192 513,193 472,193 471,194 425,195 424,196 403,197 401,199 401,514 404,516 409,516 410,517 440,519 441,520 517,524 518,525 531,526 535,528 549,546 578,575 603,596 619,608 646,625 653,632 658,645 661,661 667,681 670,687 673,690 677,691 810,691 814,690 817,687 820,681 827,656 830,640 836,626 861,600 881,576 897,553 910,530 922,527 982,524 983,523 1053,522 1053,213 1032,213 1031,212 986,210 985,209 965,208 964,207 935,205 934,204 926,204 925,203 915,202 912,199 903,179 887,154 861,122 836,96 830,82 827,66 820,41 817,35 814,32 810,31Z"/>
<path fill="#00007c" d="M674,33 672,34 667,43 662,59 662,63 657,83 651,95 647,99 617,118 588,141 552,176 540,190 532,192 519,192 518,193 481,193 480,194 428,195 427,196 407,197 404,199 403,202 403,511 405,515 414,517 442,519 443,520 456,520 457,521 471,521 472,522 520,524 521,525 534,526 538,528 552,546 588,581 617,604 647,623 651,627 657,639 662,659 662,663 667,679 672,688 674,689 683,689 684,690 803,690 804,689 813,689 815,688 820,679 826,658 829,641 835,625 865,593 879,576 897,550 908,530 920,527 981,524 982,523 1053,522 1053,214 1051,213 1030,213 1029,212 985,210 984,209 925,204 912,201 910,199 906,188 900,177 885,154 865,129 835,97 829,81 826,64 820,43 815,34 813,33 804,33 803,32 684,32 683,33Z"/>
<path fill="#000082" d="M676,34 670,39 666,48 658,82 652,96 646,102 622,117 590,142 555,176 543,190 536,192 524,192 523,193 431,195 430,196 411,197 407,199 407,514 411,516 423,517 424,518 433,518 434,519 443,519 444,520 458,520 459,521 474,521 475,522 522,524 523,525 536,526 541,528 555,546 590,580 615,600 646,620 652,626 658,640 666,674 670,683 676,688 811,688 817,683 821,674 830,635 836,621 861,595 877,576 892,555 904,533 908,529 918,527 964,525 965,524 979,524 980,523 1050,522 1053,521 1053,214 984,210 983,209 974,209 973,208 964,208 963,207 954,207 953,206 923,204 910,201 908,199 906,192 897,175 883,154 861,127 836,101 830,87 821,48 817,39 811,34Z"/>
<path fill="#000089" d="M678,36 671,40 667,48 663,60 658,84 655,93 651,100 647,104 623,119 590,145 561,173 546,190 539,192 528,192 527,193 434,195 433,196 415,197 411,199 410,203 410,510 412,515 419,517 445,519 446,520 460,520 461,521 525,524 526,525 539,526 544,528 561,549 590,577 623,603 647,618 651,622 655,629 658,638 665,669 671,682 675,685 678,686 809,686 816,682 822,669 828,644 828,640 835,620 864,589 878,572 892,552 902,533 906,529 916,527 963,525 964,524 978,524 979,523 1053,521 1053,214 983,210 973,208 922,204 908,201 906,199 905,194 898,180 884,158 864,133 835,102 828,82 828,78 822,53 816,40 812,37 809,36Z"/>
<path fill="#00008f" d="M676,39 670,44 667,50 661,71 658,87 652,101 645,108 627,119 597,142 570,167 550,190 543,192 532,192 531,193 437,195 436,196 419,197 414,200 414,513 418,516 436,518 437,519 528,524 529,525 542,526 547,528 570,555 589,573 620,598 645,614 652,621 658,635 661,651 667,672 670,678 676,683 811,683 817,678 820,672 825,655 829,634 836,616 859,592 879,568 890,552 900,533 904,529 914,527 961,525 962,524 977,524 978,523 1053,521 1053,214 994,211 993,210 983,210 982,209 962,208 961,207 952,207 951,206 920,204 906,201 904,199 903,194 896,180 879,154 859,130 836,106 831,95 825,71 825,67 820,50 817,44 811,39Z"/>
<path fill="#000095" d="M678,41 673,43 670,46 667,52 663,65 663,69 658,89 652,104 646,110 628,121 597,145 564,177 553,190 546,192 537,192 536,193 439,195 438,196 422,197 418,199 417,201 417,512 421,516 431,518 438,518 439,519 531,524 532,525 540,525 549,527 564,545 597,577 621,596 646,612 652,618 658,633 663,653 663,657 667,670 670,676 675,680 678,681 809,681 814,679 817,676 820,670 824,657 824,653 830,628 836,613 873,573 890,549 898,533 902,529 912,527 960,525 961,524 976,524 977,523 1053,521 1053,214 993,211 992,210 982,210 981,209 972,209 971,208 962,208 961,207 919,204 905,201 902,198 893,178 882,161 862,136 836,109 830,94 824,69 824,65 820,52 817,46 812,42 809,41Z"/>
<path fill="#00009b" d="M676,44 671,47 666,57 657,95 651,108 647,112 622,128 597,148 570,174 556,190 550,192 541,192 540,193 442,195 441,196 425,197 421,199 420,201 420,512 423,516 433,518 440,518 441,519 465,520 466,521 484,521 485,522 502,522 503,523 520,523 521,524 533,524 534,525 543,525 552,527 570,548 597,574 622,594 647,610 651,614 657,627 666,665 671,675 676,678 811,678 816,675 821,665 829,629 835,612 874,569 888,549 896,533 900,529 910,528 911,527 922,527 923,526 959,525 960,524 992,523 993,522 1053,521 1053,214 992,211 991,210 981,210 971,208 918,204 903,201 900,198 891,178 880,161 865,142 835,110 829,93 821,57 816,47 811,44Z"/>
<path fill="#0000a1" d="M677,46 674,47 670,51 666,59 658,94 655,103 650,112 619,133 597,151 568,180 560,190 554,192 545,192 544,193 444,195 443,196 428,197 423,200 423,513 424,515 429,517 441,518 442,519 536,524 537,525 552,526 557,528 568,542 597,571 619,589 650,610 655,619 658,628 666,663 670,671 674,675 677,676 810,676 813,675 817,671 821,663 830,623 836,608 872,569 888,546 895,532 898,529 908,528 909,527 920,527 921,526 958,525 959,524 974,524 975,523 990,523 991,522 1053,521 1053,215 1051,214 1034,214 1033,213 980,210 970,208 916,204 901,201 898,198 896,191 888,176 878,161 861,140 836,114 830,99 821,59 817,51 813,47 810,46Z"/>
<path fill="#0000a7" d="M675,49 670,53 667,59 661,81 659,93 652,112 646,118 620,135 596,155 574,177 563,190 558,192 527,193 526,194 446,195 445,196 436,196 426,199 426,514 428,516 444,519 539,524 540,525 555,526 560,528 574,545 596,567 620,587 646,604 652,610 659,629 661,641 667,663 670,669 675,673 680,674 807,674 812,673 817,669 820,663 828,632 828,628 835,607 840,600 854,587 870,569 883,551 893,532 896,529 906,528 907,527 918,527 919,526 957,525 958,524 973,524 974,523 989,523 990,522 1048,521 1053,520 1053,215 990,211 989,210 979,210 969,208 915,204 899,201 897,199 889,181 879,165 865,147 840,122 835,115 828,94 828,90 820,59 817,53 812,49 807,48 680,48Z"/>
<path fill="#0000ad" d="M676,51 672,53 668,59 658,99 654,111 651,116 647,120 625,134 605,150 580,174 565,191 554,192 553,193 533,193 532,194 451,195 450,196 433,197 429,199 429,515 434,517 445,518 446,519 528,523 529,524 542,524 543,525 552,525 562,527 580,548 605,572 625,588 647,602 651,606 654,611 658,623 668,663 671,668 676,671 811,671 815,669 819,663 826,638 830,618 836,603 868,569 885,545 893,530 898,528 916,527 917,526 956,525 957,524 972,524 973,523 987,523 988,522 1053,520 1053,215 1001,212 1000,211 989,211 988,210 979,210 978,209 969,209 968,208 959,208 958,207 924,205 923,204 900,202 896,200 885,177 875,162 862,146 836,119 830,104 826,84 819,59 816,54 811,51Z"/>
<path fill="#0000b4" d="M677,53 674,54 669,59 667,64 657,105 652,117 645,124 626,136 606,152 577,181 570,190 565,192 558,192 557,193 538,193 537,194 455,195 454,196 441,196 431,199 431,514 436,517 448,518 449,519 545,524 546,525 561,526 567,528 577,541 606,570 626,586 645,598 652,605 657,617 667,658 669,663 674,668 677,669 810,669 813,668 818,663 820,658 829,623 829,619 836,600 866,569 882,547 889,533 893,529 903,527 914,527 915,526 954,525 955,524 971,524 972,523 985,523 986,522 1053,520 1053,215 988,211 987,210 978,210 977,209 968,209 967,208 958,208 957,207 912,204 896,201 893,198 882,175 870,158 858,144 836,122 829,103 829,99 820,64 818,59 813,54 810,53Z"/>
<path fill="#0000ba" d="M676,56 671,59 666,70 657,108 652,120 645,127 633,134 611,151 587,174 572,191 562,193 544,193 543,194 459,195 458,196 443,196 434,199 434,515 442,518 450,518 451,519 548,524 549,525 565,526 570,528 587,548 602,563 626,583 645,595 652,602 657,614 666,652 671,663 676,666 811,666 816,663 821,652 831,609 835,599 867,565 880,547 887,533 891,529 901,527 912,527 913,526 952,525 953,524 969,524 970,523 984,523 985,522 1049,520 1053,519 1053,216 987,211 986,210 977,210 976,209 967,209 966,208 957,208 956,207 921,205 920,204 911,204 910,203 903,203 894,201 891,198 883,180 871,162 862,151 835,123 831,113 821,70 816,59 811,56Z"/>
<path fill="#0000c0" d="M676,59 670,64 664,80 657,111 652,123 645,130 629,140 606,159 592,173 578,190 567,193 551,193 550,194 447,196 437,199 436,201 436,512 438,516 454,519 537,523 538,524 551,524 552,525 562,525 563,526 573,527 577,530 584,540 606,563 629,582 645,592 652,599 657,611 664,642 670,658 676,663 811,663 817,658 819,654 825,634 829,613 835,596 868,561 876,550 887,530 892,528 910,527 911,526 950,525 951,524 967,524 968,523 999,522 1000,521 1038,520 1039,519 1051,519 1053,518 1053,217 1042,216 1041,215 1020,214 1019,213 985,211 984,210 956,208 955,207 919,205 918,204 909,204 908,203 901,203 892,201 889,198 882,182 868,161 835,126 829,109 825,88 819,68 817,64 811,59Z"/>
<path fill="#0000c6" d="M675,63 672,65 667,74 661,95 658,111 652,126 645,133 632,141 611,158 596,173 582,190 572,193 557,193 556,194 452,196 451,197 444,197 439,200 439,514 443,517 456,518 457,519 555,524 556,525 573,526 579,528 588,540 611,564 632,581 645,589 652,596 658,611 661,627 667,648 672,657 675,659 680,660 807,660 812,659 815,657 820,648 825,631 829,610 835,593 857,571 868,558 877,545 885,530 889,528 907,527 908,526 947,525 948,524 965,524 966,523 980,523 981,522 1041,519 1046,518 1049,516 1049,219 1046,217 1036,216 1035,215 1006,213 1005,212 994,212 993,211 984,211 983,210 954,208 953,207 907,204 906,203 899,203 890,201 887,198 880,182 868,164 857,151 835,129 829,112 825,91 820,74 815,65 812,63 807,62 680,62Z"/>
<path fill="#0000cc" d="M677,66 674,67 670,71 666,80 658,114 652,129 645,136 632,144 617,156 597,176 586,190 577,193 563,193 562,194 476,195 475,196 447,197 442,199 442,515 446,517 459,518 460,519 544,523 545,524 559,524 560,525 570,525 571,526 581,527 585,530 597,546 617,566 632,578 645,586 652,593 658,608 666,642 670,651 674,655 677,656 810,656 813,655 817,651 821,642 829,607 834,592 838,586 866,558 877,542 881,533 885,529 893,527 905,527 906,526 945,525 946,524 963,524 964,523 1023,520 1024,519 1036,518 1039,516 1039,218 1034,216 1023,215 1022,214 1003,213 1002,212 993,212 992,211 983,211 982,210 963,209 962,208 953,208 952,207 916,205 915,204 906,204 905,203 897,203 888,201 885,198 877,180 866,164 838,136 834,130 829,115 822,83 817,71 813,67 810,66Z"/>
<path fill="#0000d2" d="M676,70 671,73 667,81 663,93 658,117 652,132 646,138 636,144 615,161 604,172 588,191 581,193 569,193 568,194 461,196 445,199 444,202 444,512 445,515 463,519 562,524 563,525 580,526 586,528 604,550 615,561 636,578 646,584 652,590 658,605 662,625 667,641 671,649 676,652 811,652 816,649 820,641 824,629 824,625 831,597 836,586 864,558 874,544 880,532 883,529 891,527 902,527 903,526 962,524 963,523 1018,520 1030,517 1030,218 1028,216 1018,214 1011,214 1010,213 1001,213 1000,212 991,212 990,211 981,211 980,210 951,208 950,207 904,204 903,203 895,203 886,201 883,198 881,191 874,178 864,164 836,136 831,125 824,97 824,93 820,81 816,73 811,70Z"/>
<path fill="#0000d9" d="M677,73 674,74 670,78 667,84 658,120 655,129 651,136 618,161 607,172 591,191 585,193 575,193 574,194 465,196 449,199 448,202 448,512 449,515 466,519 565,524 566,525 584,526 589,528 607,550 618,561 651,586 655,593 658,602 667,638 670,644 674,648 677,649 810,649 813,648 817,644 820,638 827,613 829,601 835,585 862,558 874,541 878,532 881,529 889,527 900,527 901,526 960,524 961,523 975,523 976,522 987,522 988,521 1013,520 1024,517 1024,217 1019,215 1008,214 1007,213 989,212 988,211 961,209 960,208 950,208 949,207 902,204 901,203 888,202 883,200 874,181 866,169 835,137 829,121 827,109 820,84 817,78 813,74 810,73Z"/>
<path fill="#0000df" d="M675,77 670,81 667,87 657,126 652,137 647,142 637,148 622,160 609,173 593,192 580,193 579,194 554,194 553,195 469,196 453,199 452,201 452,513 454,516 470,519 569,524 570,525 587,526 592,528 609,549 622,562 637,574 647,580 652,585 657,596 667,635 670,641 675,645 681,645 682,646 805,646 806,645 812,645 817,641 820,635 830,595 835,583 861,557 873,540 879,529 887,527 897,527 898,526 938,525 939,524 958,524 959,523 998,521 999,520 1014,519 1019,516 1019,218 1015,215 1005,214 1004,213 996,213 995,212 987,212 986,211 960,209 959,208 949,208 948,207 901,204 900,203 892,203 883,201 880,198 873,182 865,170 835,139 830,127 820,87 817,81 812,77 806,77 805,76 682,76 681,77Z"/>
<path fill="#0000e5" d="M676,80 671,83 667,90 659,122 655,134 652,139 646,145 627,158 610,175 602,186 596,192 585,193 584,194 561,194 560,195 478,196 477,197 464,197 459,198 456,200 456,514 460,517 473,518 474,519 572,524 573,525 590,526 595,528 610,547 627,564 646,577 652,583 655,588 659,600 667,632 671,639 676,642 811,642 816,639 820,632 830,592 833,584 837,578 860,556 872,539 875,532 878,529 885,527 895,527 896,526 956,524 957,523 994,521 995,520 1010,519 1014,516 1014,218 1011,215 1001,213 977,211 968,209 959,209 958,208 899,204 898,203 885,202 880,200 872,183 864,171 837,144 833,138 830,130 820,90 816,83 811,80Z"/>
<path fill="#0000eb" d="M677,83 674,84 669,89 667,93 658,128 653,140 646,147 639,151 624,163 616,171 599,192 589,193 588,194 568,194 567,195 526,195 525,196 468,197 463,198 460,200 460,515 468,518 575,524 576,525 593,526 598,528 610,544 624,559 639,571 646,575 653,582 658,594 667,629 669,633 674,638 677,639 810,639 813,638 818,633 820,629 829,593 833,582 837,576 860,554 870,540 876,529 883,527 893,527 894,526 981,522 982,521 1000,520 1009,517 1009,217 1007,215 976,211 975,210 898,204 897,203 889,203 880,201 877,198 870,182 864,173 837,146 833,140 829,129 820,93 818,89 813,84 810,83Z"/>
<path fill="#0000f2" d="M678,86 674,87 668,94 662,112 659,127 653,142 646,149 631,159 614,176 603,191 599,193 593,193 592,194 535,195 534,196 493,196 492,197 466,198 463,200 463,514 467,517 472,517 473,518 578,524 579,525 596,526 601,528 614,546 631,563 646,573 653,580 659,595 666,623 669,630 674,635 678,636 809,636 813,635 819,628 823,617 828,594 833,580 861,551 875,529 881,527 890,527 891,526 979,522 980,521 996,520 1005,517 1005,217 1000,214 975,211 974,210 896,204 895,203 888,203 879,201 876,198 872,188 861,171 833,142 828,128 821,99 818,92 813,87 809,86Z"/>
<path fill="#0003f2" d="M679,89 673,91 668,97 663,111 658,133 653,144 647,150 630,162 618,174 604,192 596,194 580,194 579,195 481,197 480,198 468,199 466,201 466,513 468,516 478,518 486,518 487,519 581,524 582,525 598,526 603,528 618,548 630,560 647,572 653,578 658,589 663,611 668,625 675,632 679,633 808,633 814,631 819,625 825,607 828,592 835,575 858,553 866,542 871,532 874,529 889,526 977,522 978,521 993,520 1001,517 1001,217 997,214 974,211 973,210 895,204 894,203 881,202 876,200 869,185 858,169 835,147 828,130 825,115 819,97 812,90 808,89Z"/>
<path fill="#0009eb" d="M675,94 669,99 667,103 656,141 653,146 646,153 634,161 619,176 607,192 600,194 587,194 586,195 490,197 489,198 475,199 473,201 473,514 478,517 492,518 493,519 585,524 586,525 601,526 606,528 619,546 634,561 646,569 653,576 656,581 667,619 669,623 675,628 680,629 807,629 812,628 818,623 824,607 827,592 833,576 856,553 863,544 872,529 886,526 974,522 975,521 989,520 996,517 996,216 989,213 972,211 971,210 893,204 892,203 884,203 876,201 873,198 868,186 860,174 833,146 827,130 824,115 818,99 812,94 807,93 680,93Z"/>
<path fill="#000ee5" d="M676,97 670,101 666,109 660,132 653,148 646,155 633,164 622,175 613,188 608,193 592,194 591,195 497,197 496,198 486,198 479,201 479,514 484,517 497,518 498,519 588,524 589,525 598,525 607,527 612,532 613,535 622,547 633,558 646,567 653,574 658,584 666,613 670,621 676,625 811,625 817,621 821,613 829,583 833,574 857,550 863,542 868,532 872,528 883,527 884,526 899,526 900,525 920,525 921,524 942,524 943,523 972,522 973,521 986,520 992,517 992,216 986,213 970,211 969,210 891,204 875,201 871,197 866,185 857,172 833,148 829,139 821,109 817,101 811,97Z"/>
<path fill="#0014df" d="M675,101 669,106 666,112 657,143 653,150 647,156 633,166 625,174 612,192 606,194 597,194 596,195 505,197 504,198 493,198 488,199 485,201 485,515 489,517 502,518 503,519 591,524 592,525 601,525 611,528 625,548 633,556 647,566 653,572 657,579 666,610 669,616 675,621 679,622 808,622 812,621 818,616 821,610 827,587 832,574 858,547 867,532 871,528 881,527 882,526 896,526 897,525 917,525 918,524 939,524 940,523 970,522 971,521 983,520 988,518 989,516 989,217 988,215 984,213 974,211 949,209 948,208 890,204 889,203 876,202 872,200 867,189 858,175 832,148 827,135 821,112 818,106 812,101 808,100 679,100Z"/>
<path fill="#0019d9" d="M675,104 669,109 666,115 657,145 652,153 635,166 626,175 614,192 609,194 601,194 600,195 499,198 491,200 490,202 490,514 494,517 499,518 533,520 534,521 548,521 549,522 594,524 595,525 609,526 613,528 626,547 635,556 652,569 657,577 666,607 669,613 675,618 812,618 818,613 821,607 829,579 834,569 855,549 868,529 880,526 967,522 968,521 980,520 985,518 986,516 986,217 984,214 973,211 947,209 946,208 936,208 935,207 888,204 872,201 869,198 864,186 855,173 834,153 829,143 821,115 818,109 812,104Z"/>
<path fill="#001fd3" d="M676,107 670,111 666,118 660,139 654,152 647,159 637,166 627,176 619,188 614,193 604,194 603,195 583,195 582,196 548,196 547,197 506,198 497,200 495,203 495,513 497,516 513,519 596,524 597,525 605,525 613,527 617,531 627,546 637,556 647,563 654,570 660,583 666,604 670,611 676,615 811,615 817,611 821,604 829,577 833,569 856,546 867,529 878,526 933,524 934,523 952,523 953,522 973,521 978,520 982,518 983,516 983,216 979,213 971,211 945,209 944,208 934,208 933,207 897,205 896,204 887,204 871,201 868,198 864,188 856,176 833,153 829,145 821,118 817,111 811,107Z"/>
<path fill="#0024cd" d="M677,110 672,112 669,115 663,129 660,141 653,155 639,166 627,178 620,189 616,193 606,195 589,195 588,196 555,196 554,197 513,198 512,199 506,199 501,202 501,514 505,517 517,518 518,519 599,524 615,527 627,544 639,556 653,567 658,576 663,590 663,593 669,607 672,610 677,612 810,612 815,610 818,607 821,601 829,575 834,566 854,547 867,528 876,526 889,526 890,525 962,522 963,521 975,520 980,517 980,216 977,213 969,211 943,209 942,208 932,208 931,207 885,204 870,201 867,198 864,190 854,175 832,153 829,147 821,121 818,115 813,111 810,110Z"/>
<path fill="#002ac7" d="M677,113 672,115 669,118 665,126 658,148 654,155 647,162 642,165 627,180 618,193 609,195 594,195 593,196 562,196 561,197 520,198 519,199 512,199 507,201 507,515 511,517 521,518 522,519 601,524 602,525 610,525 618,528 627,542 642,557 647,560 654,567 658,574 665,596 669,604 672,607 677,609 810,609 815,607 818,604 822,596 828,576 833,566 851,549 860,537 862,532 866,528 875,526 886,526 887,525 959,522 960,521 973,520 977,518 977,215 972,212 967,212 960,210 918,207 917,206 906,206 905,205 894,205 893,204 876,203 869,201 866,198 860,185 855,178 833,156 828,146 822,126 818,118 813,114 810,113Z"/>
<path fill="#002fc1" d="M676,116 673,117 669,121 664,131 660,145 655,155 651,160 639,169 631,177 619,193 612,195 598,195 597,196 526,198 525,199 514,200 512,202 512,514 516,517 526,518 527,519 604,524 618,527 631,545 639,553 651,562 655,567 660,577 664,591 669,601 673,605 676,606 811,606 814,605 818,601 823,591 827,577 832,566 854,544 861,532 865,528 873,526 884,526 885,525 957,522 958,521 971,520 975,517 975,215 969,212 959,211 958,210 916,207 915,206 904,206 903,205 892,205 891,204 882,204 868,201 865,198 859,185 854,178 832,156 827,145 823,131 818,121 814,117 811,116Z"/>
<path fill="#0034bb" d="M675,119 668,125 663,136 659,149 654,158 630,180 621,193 614,195 602,195 601,196 532,198 531,199 523,199 517,202 517,514 518,516 531,519 606,524 619,527 623,531 630,542 654,564 659,573 663,586 668,597 675,603 812,603 819,597 824,586 827,575 834,562 852,545 860,532 864,528 872,526 882,526 883,525 954,522 955,521 968,520 971,519 973,516 973,217 972,214 956,210 881,204 867,201 864,198 859,187 852,177 834,160 827,147 824,136 819,125 812,119Z"/>
<path fill="#003ab5" d="M676,121 673,122 667,129 660,148 654,159 631,180 622,193 616,195 605,195 604,196 536,198 535,199 524,200 521,203 521,514 524,517 534,519 568,521 569,522 582,522 583,523 596,523 597,524 607,524 608,525 619,526 623,529 631,542 654,563 660,574 667,593 673,600 676,601 811,601 814,600 820,593 829,569 834,561 851,545 863,528 871,526 880,526 881,525 951,522 952,521 965,520 970,518 971,515 971,218 968,213 954,210 880,204 866,201 863,198 862,194 855,182 834,161 829,153 820,129 814,122 811,121Z"/>
<path fill="#003faf" d="M674,124 667,131 661,147 654,160 633,179 623,193 617,195 608,195 607,196 541,198 540,199 528,200 525,203 525,514 528,517 538,519 609,524 622,527 633,543 654,562 661,575 667,591 674,598 678,599 809,599 813,598 820,591 828,570 834,560 851,544 862,528 869,526 878,526 879,525 916,524 917,523 934,523 935,522 958,521 966,519 968,517 968,215 963,212 953,211 952,210 912,207 911,206 900,206 899,205 888,205 887,204 879,204 865,201 851,178 834,162 828,152 820,131 813,124 809,123 678,123Z"/>
<path fill="#0044a9" d="M674,126 667,133 659,153 654,161 635,178 624,193 619,195 611,195 610,196 545,198 544,199 536,199 529,202 529,515 532,517 541,519 611,524 623,527 635,544 654,561 659,569 667,589 674,596 679,596 680,597 807,597 808,596 813,596 820,589 831,563 850,544 861,528 868,526 877,526 878,525 946,522 947,521 961,520 965,518 965,214 961,212 951,211 950,210 887,205 886,204 871,203 865,201 861,197 856,186 850,178 831,159 820,133 813,126 808,126 807,125 680,125 679,126Z"/>
<path fill="#004aa3" d="M674,128 668,133 660,152 654,162 636,178 625,193 620,195 613,195 612,196 550,198 549,199 540,199 533,202 533,515 535,517 544,519 575,521 576,522 589,522 590,523 602,523 603,524 618,525 624,527 636,544 654,560 660,570 668,589 674,594 682,594 683,595 804,595 805,594 813,594 819,589 831,562 850,543 857,532 861,528 876,525 911,524 912,523 929,523 930,522 953,521 961,519 963,517 963,215 959,212 949,211 948,210 909,207 908,206 897,206 896,205 886,205 885,204 870,203 864,201 861,198 857,189 850,179 831,160 819,133 813,128 805,128 804,127 683,127 682,128Z"/>
<path fill="#004f9d" d="M674,130 666,138 661,151 654,163 637,178 626,193 614,196 544,199 540,200 536,203 536,514 539,517 547,519 614,524 625,527 637,544 654,559 661,571 666,584 674,592 681,592 682,593 805,593 806,592 813,592 821,584 825,573 832,560 850,542 856,532 860,528 875,525 950,521 959,519 961,516 961,216 959,213 946,210 896,206 895,205 885,205 884,204 869,203 863,201 860,198 859,194 850,180 832,162 825,149 821,138 813,130 806,130 805,129 682,129 681,130Z"/>
<path fill="#005497" d="M674,132 667,138 662,150 654,164 639,177 627,193 616,196 548,199 543,200 540,202 540,515 542,517 550,519 615,524 626,527 639,545 650,554 657,562 667,584 672,589 679,591 808,591 813,590 820,584 832,559 850,541 856,531 861,527 872,526 873,525 887,525 888,524 938,522 939,521 953,520 958,518 958,214 954,212 944,210 884,205 883,204 868,203 862,201 850,181 832,163 820,138 813,132 808,131 679,131Z"/>
<path fill="#005a91" d="M673,134 667,140 658,159 653,166 639,178 628,193 624,195 618,195 617,196 552,199 543,202 543,515 545,517 553,519 582,521 583,522 595,522 596,523 607,523 608,524 616,524 625,526 630,531 639,544 651,554 656,560 669,585 673,588 677,589 810,589 814,588 820,582 832,558 849,541 856,530 860,527 871,526 872,525 885,525 886,524 935,522 936,521 945,521 954,519 956,517 956,214 952,212 942,210 904,207 903,206 893,206 892,205 882,205 862,201 858,197 857,193 849,181 832,164 820,140 814,134 810,133 677,133Z"/>
<path fill="#005f8a" d="M546,203 546,515 548,517 563,520 609,523 610,524 617,524 626,526 631,531 632,534 639,543 656,559 668,582 671,585 676,587 811,587 816,585 819,582 832,557 849,540 854,532 860,527 870,526 871,525 883,525 884,524 932,522 933,521 948,520 953,518 954,516 954,216 952,213 940,210 914,208 913,207 903,207 902,206 892,206 891,205 881,205 861,201 858,198 854,189 849,182 832,165 819,140 816,137 811,135 676,135 671,137 668,140 656,163 639,179 629,193 619,196 555,199 550,200Z"/>
<path fill="#006484" d="M549,203 549,514 551,517 566,520 610,523 611,524 619,524 627,526 639,542 656,558 665,576 674,585 813,585 820,579 827,564 833,555 849,539 854,531 859,527 869,525 881,525 882,524 930,522 931,521 945,520 951,517 951,215 949,213 938,210 902,207 901,206 891,206 890,205 880,205 860,201 849,183 830,163 820,143 813,137 674,137 667,143 656,164 639,180 633,189 628,194 620,196 609,196 608,197 587,197 586,198 559,199 558,200 553,200Z"/>
<path fill="#006a7e" d="M552,203 552,515 554,517 568,520 620,524 629,527 639,541 656,557 668,579 673,583 677,584 810,584 814,583 819,579 830,558 845,543 852,534 853,531 858,527 868,525 879,525 880,524 897,524 898,523 914,523 915,522 937,521 946,519 948,517 948,214 947,213 936,210 879,205 878,204 865,203 860,201 845,179 830,164 819,143 814,139 810,138 677,138 673,139 666,146 656,165 639,181 629,194 622,196 612,196 611,197 591,197 590,198 562,199 554,201Z"/>
<path fill="#006f78" d="M555,203 555,515 557,517 571,520 579,520 580,521 621,524 630,527 639,540 655,555 667,576 672,581 675,582 812,582 815,581 820,576 831,556 846,541 852,532 857,527 867,525 878,525 879,524 894,524 895,523 911,523 912,522 934,521 943,519 945,517 945,214 939,211 928,210 927,209 878,205 877,204 864,203 859,201 856,198 850,186 831,166 820,146 815,141 812,140 675,140 672,141 667,146 655,167 639,182 630,194 623,196 614,196 613,197 594,197 593,198 566,199 557,201Z"/>
<path fill="#007472" d="M558,203 558,515 560,517 573,520 614,523 629,526 634,531 639,539 654,553 667,575 673,580 678,581 809,581 814,580 820,575 831,555 847,539 852,531 857,527 866,525 876,525 877,524 892,524 893,523 909,523 910,522 932,521 942,518 943,516 943,215 942,213 932,210 887,206 886,205 877,205 858,201 847,183 831,167 820,147 814,142 809,141 678,141 673,142 667,147 654,169 639,183 631,194 615,197 569,199 560,201Z"/>
<path fill="#007a6c" d="M561,202 561,516 562,517 576,520 616,523 630,526 639,538 657,556 666,572 672,578 675,579 812,579 815,578 821,572 832,553 847,538 852,530 856,527 865,525 874,525 875,524 890,524 891,523 929,521 938,519 940,517 940,214 930,210 896,207 895,206 886,206 885,205 876,205 875,204 863,203 858,201 855,198 847,184 829,165 821,150 815,144 812,143 675,143 672,144 666,150 657,166 639,184 633,193 625,196 572,199Z"/>
<path fill="#008066" d="M564,202 563,205 563,514 565,517 578,520 617,523 631,526 635,530 639,537 657,555 666,571 671,576 677,578 810,578 816,576 821,571 830,555 855,527 864,525 873,525 874,524 917,522 918,521 932,520 937,518 938,515 938,216 937,213 921,209 875,205 874,204 862,203 857,201 847,185 830,167 821,151 816,146 810,144 677,144 671,146 666,151 657,167 639,185 632,194 627,196 620,196 619,197 575,199Z"/>
<path fill="#00875f" d="M674,146 667,151 656,169 639,186 633,194 628,196 621,196 620,197 578,199 568,201 566,203 566,515 568,517 574,519 618,523 619,524 629,525 633,527 639,536 656,553 663,565 670,574 674,576 684,576 685,577 802,577 803,576 813,576 820,571 830,554 843,541 854,527 863,525 871,525 872,524 886,524 887,523 902,523 903,522 924,521 934,518 935,517 935,214 930,211 920,210 919,209 874,205 858,202 853,197 851,192 843,181 830,168 820,151 813,146 803,146 802,145 685,145 684,146Z"/>
<path fill="#008d59" d="M569,203 569,516 570,517 582,520 619,523 632,526 637,531 639,535 655,551 665,567 671,573 676,575 811,575 816,573 822,567 831,552 844,539 850,530 854,527 862,525 870,525 871,524 921,521 930,519 932,517 932,214 930,212 917,209 866,204 856,201 853,198 851,193 844,183 828,166 822,155 816,149 811,147 676,147 671,149 665,155 655,171 639,187 634,194 622,197 581,199 580,200 574,200Z"/>
<path fill="#009353" d="M572,202 571,204 571,515 573,517 585,520 621,523 633,526 643,539 658,554 665,566 671,572 678,574 809,574 814,573 822,566 832,550 845,537 853,527 869,524 910,522 911,521 924,520 929,518 930,514 930,217 929,213 925,211 915,209 872,205 871,204 860,203 855,201 848,189 832,172 822,156 816,150 809,148 678,148 673,149 665,156 658,168 643,183 637,192 633,195 623,197 612,197 611,198 584,199Z"/>
<path fill="#00994d" d="M674,150 670,152 665,157 657,170 643,184 634,195 625,197 587,199 586,200 576,201 574,203 574,516 581,519 622,523 634,526 643,538 657,552 665,565 670,570 674,572 681,572 682,573 805,573 806,572 813,572 817,570 822,565 829,553 852,527 868,524 916,521 926,518 927,517 927,214 925,212 919,210 871,205 870,204 859,203 855,201 852,198 845,186 829,169 822,157 817,152 813,150 806,150 805,149 682,149 681,150Z"/>
<path fill="#00a046" d="M577,202 576,204 576,515 578,517 589,520 623,523 634,526 642,536 656,550 666,565 670,569 675,571 812,571 817,569 821,565 830,551 841,540 848,530 854,526 866,525 867,524 913,521 922,519 924,517 924,213 923,212 904,208 863,204 854,201 850,196 848,191 841,182 830,171 821,157 817,153 812,151 675,151 670,153 666,157 656,172 642,186 636,194 626,197 589,199Z"/>
<path fill="#00a640" d="M579,203 579,516 580,517 591,520 624,523 635,526 642,535 655,548 666,564 669,567 676,570 811,570 818,567 821,564 831,549 851,527 866,524 911,521 921,518 922,516 922,214 920,212 915,210 910,210 903,208 877,206 876,205 869,205 855,202 850,197 848,192 842,184 831,173 821,158 818,155 811,152 676,152 669,155 666,158 655,174 642,187 637,194 627,197 585,200 581,201Z"/>
<path fill="#00ac3a" d="M581,203 581,516 587,519 625,523 636,526 646,539 658,551 665,562 669,566 677,569 810,569 818,566 822,562 829,551 850,527 864,524 909,521 917,519 919,517 919,213 918,212 908,209 862,204 853,201 850,198 843,186 833,176 822,160 818,156 810,153 677,153 669,156 665,160 658,171 636,195 628,197 620,197 619,198 606,198 605,199 587,200Z"/>
<path fill="#00b235" d="M584,202 583,204 583,515 584,517 595,520 626,523 636,526 657,549 665,561 671,566 678,568 809,568 814,567 822,561 829,550 844,534 846,530 852,526 862,525 863,524 873,524 874,523 898,522 899,521 911,520 916,518 917,516 917,214 914,211 899,208 867,205 852,201 844,188 829,172 822,161 816,156 809,154 678,154 673,155 665,161 657,173 645,185 637,195 621,198 597,199Z"/>
<path fill="#00b830" d="M673,156 665,162 656,175 644,187 639,194 630,197 593,200 587,202 585,205 585,514 588,518 597,520 627,523 637,526 644,535 656,547 665,560 671,565 678,567 809,567 814,566 822,560 830,548 840,538 844,532 851,526 861,525 862,524 871,524 872,523 904,521 912,519 914,517 914,213 904,209 866,205 853,202 849,198 840,184 830,174 822,162 814,156 809,155 678,155Z"/>
<path fill="#00be2b" d="M671,158 665,163 659,172 638,195 624,198 595,200 588,203 588,516 594,519 628,523 638,526 668,562 671,564 679,566 808,566 816,564 822,559 832,545 848,527 861,524 901,521 911,518 912,516 912,214 911,212 896,208 859,204 851,201 841,186 832,177 819,160 813,157 808,156 679,156Z"/>
<path fill="#00c426" d="M671,159 664,165 658,174 639,195 625,198 597,200 590,203 590,516 596,519 629,523 638,526 658,548 668,561 671,563 679,565 808,565 813,564 819,561 823,557 835,541 850,526 860,524 868,524 869,523 891,522 907,519 909,517 909,213 907,211 900,209 864,205 852,202 847,197 842,188 829,174 823,165 819,161 813,158 808,157 679,157Z"/>
<path fill="#00ca20" d="M671,160 664,166 657,176 647,186 641,194 633,197 595,201 592,203 592,516 602,520 624,522 639,526 668,560 671,562 679,564 808,564 816,562 819,560 842,532 849,526 859,524 867,524 868,523 889,522 905,519 907,517 907,213 905,211 898,209 863,205 850,201 847,198 842,189 830,176 823,166 819,162 813,159 808,158 679,158Z"/>
<path fill="#00d01b" d="M671,161 663,168 660,173 640,195 628,198 602,200 595,202 594,204 594,516 604,520 625,522 640,526 668,559 671,561 679,563 808,563 816,561 819,559 843,530 849,526 858,524 865,524 866,523 894,521 904,518 905,516 905,214 904,212 891,208 869,206 851,202 846,197 843,191 831,178 824,168 819,163 813,160 808,159 679,159Z"/>
<path fill="#00d616" d="M673,161 669,163 662,170 641,195 629,198 604,200 600,201 596,204 596,516 601,519 632,523 640,526 658,546 662,552 669,559 673,561 678,562 809,562 814,561 818,559 825,552 828,547 846,527 857,524 892,521 900,519 902,517 902,212 894,209 862,205 849,201 840,188 828,175 825,170 818,163 814,161 809,160 678,160Z"/>
<path fill="#00dc11" d="M669,164 661,172 643,194 631,198 606,200 602,201 598,204 598,516 603,519 627,522 641,526 669,558 677,561 810,561 818,558 826,550 845,527 856,524 890,521 898,519 900,517 900,213 898,211 892,209 861,205 848,201 841,190 826,172 818,164 810,161 677,161Z"/>
<path fill="#00e20c" d="M669,165 660,174 642,195 632,198 608,200 604,201 600,204 600,516 602,518 609,520 628,522 640,525 644,528 647,533 669,557 677,560 810,560 818,557 827,548 831,542 845,527 850,525 861,524 862,523 888,521 896,519 898,517 898,213 891,209 866,206 849,202 827,174 818,165 810,162 677,162Z"/>
<path fill="#00e806" d="M672,164 663,171 643,195 633,198 610,200 602,203 602,516 607,519 623,522 629,522 642,526 667,555 676,559 811,559 815,558 824,551 844,527 854,524 891,520 895,518 896,516 896,213 889,209 859,205 847,201 839,189 824,171 817,165 811,163 676,163Z"/>
<path fill="#00f000" d="M672,165 668,167 643,195 634,198 608,201 604,203 603,208 603,513 604,516 609,519 635,523 643,526 662,549 668,555 675,558 682,558 683,559 804,559 805,558 815,557 819,555 825,549 840,530 845,526 860,523 868,523 869,522 889,520 893,518 894,515 894,214 892,211 887,209 858,205 848,202 825,173 819,167 812,164 805,164 804,163 683,163 682,164Z"/>
<path fill="#09e800" d="M670,167 662,174 644,195 635,198 608,202 606,205 606,515 607,517 611,519 631,522 642,525 646,528 667,553 676,557 811,557 817,555 825,548 836,534 844,526 858,523 881,521 888,519 890,517 890,212 880,208 857,205 847,202 825,174 817,167 811,165 676,165Z"/>
<path fill="#0fe300" d="M672,167 668,169 659,178 645,195 636,198 612,201 608,204 608,213 607,214 607,508 608,509 608,516 612,519 637,523 644,526 668,553 675,556 680,556 681,557 806,557 815,555 819,553 827,545 842,527 851,524 884,520 888,518 889,516 889,213 886,210 862,206 847,202 827,177 819,169 812,166 807,166 806,165 681,165Z"/>
<path fill="#16de00" d="M673,167 666,171 645,195 637,198 618,200 611,202 609,204 609,516 611,518 617,520 633,522 643,525 647,528 666,551 673,555 678,556 809,556 814,555 821,551 842,527 850,524 878,521 885,519 887,517 887,212 882,209 856,205 845,201 824,174 814,167 809,166 678,166Z"/>
<path fill="#1cd900" d="M672,168 667,171 660,178 646,195 632,199 612,202 610,205 610,515 611,517 615,519 638,523 645,526 667,551 676,555 682,555 683,556 804,556 805,555 815,554 820,551 827,544 841,527 850,524 881,520 885,518 886,514 886,214 883,210 855,205 846,202 827,178 820,171 811,167 805,167 804,166 683,166 682,167Z"/>
<path fill="#22d400" d="M671,169 663,175 646,195 638,198 616,201 612,204 612,210 611,211 611,511 612,516 616,519 634,522 644,525 664,548 671,553 679,555 808,555 816,553 824,547 841,527 849,524 875,521 882,519 884,517 884,212 879,209 855,205 844,201 824,175 818,170 808,167 679,167Z"/>
<path fill="#28cf00" d="M670,170 660,179 649,193 645,196 639,198 622,200 615,202 613,204 613,516 617,519 635,522 646,526 667,550 676,554 685,554 686,555 801,555 802,554 811,554 817,552 827,543 840,527 854,523 874,521 882,518 882,510 883,509 883,215 882,212 878,209 854,205 845,202 827,179 820,172 811,168 802,168 801,167 686,167 685,168 676,168Z"/>
<path fill="#2eca00" d="M672,170 668,172 647,195 639,198 616,202 614,205 614,516 618,519 640,523 645,525 668,550 680,554 807,554 815,552 819,550 840,527 853,523 872,521 879,519 881,517 881,212 879,210 873,208 858,206 845,202 840,197 830,183 819,172 812,169 807,168 680,168Z"/>
<path fill="#34c400" d="M667,173 646,196 635,199 620,201 616,203 615,206 615,515 617,518 627,521 640,523 647,526 667,549 677,553 810,553 820,549 827,542 837,529 841,526 847,524 871,521 879,518 879,512 880,511 880,214 879,211 872,208 853,205 844,202 832,186 820,173 810,169 677,169Z"/>
<path fill="#3abf00" d="M672,171 668,173 648,195 641,198 621,201 617,204 616,208 616,513 617,517 624,520 637,522 646,525 668,549 675,552 680,552 681,553 806,553 815,551 819,549 839,527 847,524 874,520 878,517 878,212 871,208 857,206 844,202 839,197 830,184 819,173 812,170 807,170 806,169 681,169Z"/>
<path fill="#41b900" d="M673,171 666,175 647,196 637,199 622,201 618,204 618,211 617,212 617,510 618,511 618,516 622,519 641,523 648,526 666,547 677,552 810,552 814,551 821,547 840,526 851,523 875,519 877,515 877,213 873,209 848,204 842,201 832,187 821,175 810,170 677,170Z"/>
<path fill="#47b300" d="M672,172 668,174 649,195 642,198 624,201 619,204 619,213 618,214 618,508 619,509 619,516 626,520 634,521 647,525 668,548 675,551 680,551 681,552 806,552 815,550 819,548 838,527 850,523 871,520 875,517 875,211 872,209 851,205 843,202 830,185 819,174 812,171 807,171 806,170 681,170Z"/>
<path fill="#4dad00" d="M671,173 666,176 648,196 643,198 625,201 620,204 620,216 619,217 619,505 620,506 620,516 624,519 639,522 647,525 666,546 671,549 678,551 809,551 816,549 821,546 839,526 855,522 870,520 874,517 874,212 867,208 855,206 843,202 821,176 816,173 809,171 678,171Z"/>
<path fill="#53a700" d="M672,173 668,175 656,187 650,195 643,198 623,202 621,205 621,218 620,219 620,503 621,504 621,516 625,519 643,523 649,526 656,535 668,547 675,550 680,550 681,551 806,551 815,549 819,547 830,536 837,527 844,524 865,521 871,519 873,515 873,213 869,209 854,205 850,205 842,202 830,186 819,175 812,172 807,172 806,171 681,171Z"/>
<path fill="#59a100" d="M671,174 666,177 649,196 640,199 627,201 623,203 622,205 622,220 621,221 621,501 622,502 622,516 626,519 648,525 666,545 671,548 678,550 809,550 816,548 821,545 838,526 848,523 864,521 871,517 871,509 872,508 872,215 871,211 862,207 858,207 842,202 828,184 821,177 816,174 809,172 678,172Z"/>
<path fill="#5f9b00" d="M672,174 668,176 649,196 640,199 628,201 624,203 623,205 623,219 622,220 622,502 623,503 623,516 627,519 644,523 650,526 656,534 668,546 675,549 680,549 681,550 806,550 815,548 819,546 838,526 843,524 866,520 870,517 870,211 861,207 843,203 839,200 830,187 819,176 812,173 807,173 806,172 681,172Z"/>
<path fill="#669400" d="M671,175 666,178 650,196 641,199 629,201 625,203 624,205 624,218 623,219 623,503 624,504 624,516 630,520 641,522 649,525 666,544 671,547 678,549 809,549 816,547 821,544 836,527 847,523 865,520 869,516 869,212 866,209 841,202 828,185 821,178 816,175 809,173 678,173Z"/>
<path fill="#6c8e00" d="M672,175 668,177 650,196 642,199 630,201 626,203 625,205 625,217 624,218 624,504 625,505 625,516 631,520 638,521 649,525 668,545 675,548 680,548 681,549 806,549 815,547 819,545 837,526 846,523 864,520 867,518 868,515 868,212 865,209 848,205 841,202 836,197 830,188 819,177 812,174 807,174 806,173 681,173Z"/>
<path fill="#728800" d="M671,176 666,179 658,187 654,193 649,197 631,201 627,203 626,205 626,215 625,216 625,506 626,507 626,516 632,520 650,525 666,543 671,546 678,548 809,548 816,546 821,543 835,527 842,524 862,520 866,517 867,512 867,213 864,209 851,206 839,201 828,186 821,179 816,176 809,174 678,174Z"/>
<path fill="#788200" d="M672,176 663,182 651,196 643,199 632,201 628,203 627,205 627,213 626,214 626,508 627,509 627,516 630,519 643,522 650,525 662,539 668,544 680,548 807,548 815,546 824,540 836,526 845,523 858,521 865,517 865,510 866,509 866,214 865,211 861,208 847,205 840,202 824,182 815,176 807,174 680,174Z"/>
<path fill="#7c7c00" d="M671,177 666,180 650,197 633,201 628,206 628,215 627,216 627,506 628,507 628,516 631,519 649,524 654,528 666,542 671,545 678,547 809,547 816,545 821,542 836,526 844,523 860,520 864,516 864,211 857,207 841,203 837,200 832,192 821,180 816,177 809,175 678,175Z"/>
<path fill="#807600" d="M673,177 667,180 652,196 648,198 634,201 630,204 629,207 629,514 630,517 635,520 641,521 651,525 667,542 673,545 682,547 805,547 814,545 820,542 835,526 859,520 862,517 862,512 863,511 863,213 862,210 839,202 830,190 820,180 811,176 806,176 805,175 682,175Z"/>
<path fill="#847000" d="M672,178 664,183 656,193 651,197 633,202 631,204 630,209 630,513 631,517 636,520 652,525 664,539 672,544 679,546 808,546 815,544 823,539 833,527 839,524 857,520 861,516 861,211 857,208 840,203 836,200 831,192 823,183 815,178 808,176 679,176Z"/>
<path fill="#886900" d="M671,179 666,182 653,196 633,203 631,211 631,511 632,516 637,520 652,525 666,540 677,545 684,545 685,546 802,546 816,543 821,540 834,526 856,520 859,517 860,512 860,212 856,208 838,202 828,189 821,182 810,177 803,177 802,176 685,176Z"/>
<path fill="#8c6400" d="M670,180 654,196 636,202 633,206 633,211 632,212 632,510 633,511 633,516 638,520 653,525 670,542 681,545 806,545 817,542 835,525 852,521 856,519 858,516 858,508 859,507 859,215 858,211 855,208 839,203 835,200 830,192 817,180 806,177 681,177Z"/>
<path fill="#935d00" d="M674,179 665,184 653,197 637,202 634,206 634,211 633,212 633,510 634,511 634,516 639,520 652,524 665,538 678,544 809,544 813,543 822,538 833,526 840,523 851,521 855,519 857,515 857,505 858,504 858,218 857,217 857,211 854,208 843,205 837,202 822,184 809,178 678,178Z"/>
<path fill="#995700" d="M673,180 667,183 653,197 638,202 635,205 635,210 634,211 634,511 635,516 642,521 654,525 667,539 673,542 681,544 806,544 814,542 820,539 834,525 850,521 854,519 856,515 856,504 857,503 857,219 856,218 856,211 853,208 838,203 820,183 814,180 806,178 681,178Z"/>
<path fill="#9f5100" d="M674,180 665,185 655,196 637,203 635,210 635,512 637,518 654,525 665,537 678,543 686,543 687,544 800,544 801,543 813,542 822,537 832,526 853,519 855,514 855,504 856,503 856,219 855,218 855,211 850,207 842,205 836,202 822,185 809,179 801,179 800,178 687,178 686,179Z"/>
<path fill="#a54b00" d="M673,181 667,184 654,197 641,201 638,203 636,209 636,218 635,219 635,503 636,504 637,516 641,520 649,522 656,526 667,538 673,541 681,543 806,543 814,541 820,538 833,525 852,519 854,514 854,504 855,503 855,219 854,218 854,211 849,207 837,203 820,184 814,181 806,179 681,179Z"/>
<path fill="#ac4400" d="M674,181 665,186 653,198 640,202 637,208 637,215 636,216 636,506 637,507 638,517 642,520 655,525 668,538 674,541 684,542 685,543 802,543 803,542 813,541 822,536 831,526 851,519 853,514 853,505 854,504 854,218 853,217 853,211 850,208 835,202 822,186 809,180 803,180 802,179 685,179 684,180Z"/>
<path fill="#b23e00" d="M673,182 667,185 655,197 641,202 639,204 637,214 637,508 638,509 638,515 641,519 654,524 667,537 680,542 807,542 814,540 820,537 831,526 850,519 852,514 852,506 853,505 853,217 852,216 852,211 851,209 836,203 820,185 807,180 680,180Z"/>
<path fill="#b83800" d="M674,182 665,187 657,196 642,202 639,206 639,211 638,212 638,510 639,515 642,519 656,525 668,537 674,540 684,542 803,542 813,540 822,535 832,525 849,519 852,507 852,215 851,211 847,207 836,203 830,197 827,192 819,185 813,182 803,180 684,180Z"/>
<path fill="#be3200" d="M673,183 667,186 656,197 647,200 641,204 638,220 638,502 639,503 640,516 644,520 655,524 667,536 680,541 807,541 814,539 820,536 830,526 848,519 850,515 850,509 851,508 851,214 850,210 848,208 834,202 829,195 820,186 807,181 680,181Z"/>
<path fill="#c52d00" d="M674,183 665,188 656,197 645,201 641,205 640,215 639,216 639,506 641,516 643,519 658,526 668,536 674,539 683,541 804,541 813,539 822,534 831,525 847,519 850,509 850,213 849,210 847,208 835,203 827,193 819,186 813,183 804,181 683,181Z"/>
<path fill="#cb2800" d="M675,183 667,187 657,197 644,202 642,205 640,214 640,508 642,517 644,519 657,525 670,537 679,540 808,540 812,539 820,535 829,526 845,520 848,516 848,511 849,510 849,212 846,208 835,203 820,187 808,182 679,182Z"/>
<path fill="#d12400" d="M671,185 665,189 657,197 645,202 643,204 641,212 641,510 642,515 646,520 656,524 669,536 682,540 805,540 816,537 822,533 830,525 844,520 847,516 848,511 848,212 844,207 834,203 827,194 818,186 805,182 682,182Z"/>
<path fill="#d71f00" d="M672,185 667,188 659,196 646,202 644,204 641,217 641,505 642,506 643,516 647,520 658,525 670,536 678,539 685,539 686,540 801,540 815,537 830,525 843,520 846,516 847,505 848,504 848,218 847,217 847,211 845,208 834,203 820,188 809,183 802,183 801,182 686,182Z"/>
<path fill="#dd1a00" d="M673,185 666,189 658,197 648,201 644,205 642,214 642,508 644,516 646,519 657,524 669,535 680,539 807,539 814,537 821,533 831,524 842,520 845,517 847,507 847,215 846,210 832,202 821,189 814,185 807,183 680,183Z"/>
<path fill="#e31600" d="M674,185 668,188 657,198 647,202 643,212 643,510 645,517 648,520 652,521 660,526 668,534 674,537 683,539 804,539 813,537 819,534 829,525 843,519 846,509 846,213 845,210 842,207 833,203 824,192 819,188 813,185 804,183 683,183Z"/>
<path fill="#e91100" d="M673,186 666,190 659,197 648,202 646,204 643,217 643,505 645,515 649,520 659,525 666,532 679,538 808,538 814,536 821,532 830,524 841,520 843,518 845,510 845,212 841,207 834,204 821,190 808,184 679,184Z"/>
<path fill="#ef0c00" d="M674,186 665,191 656,199 650,201 646,206 644,214 644,508 646,516 648,519 658,524 668,533 681,538 806,538 813,536 822,531 828,525 840,520 843,516 844,506 845,505 845,217 844,216 844,211 842,208 831,202 822,191 813,186 806,184 681,184Z"/>
<path fill="#f50800" d="M672,187 667,190 661,196 648,203 645,212 645,219 644,220 644,502 647,517 650,520 660,525 670,534 684,538 803,538 815,535 828,525 839,520 842,516 844,507 844,215 843,210 840,207 832,203 817,188 803,184 684,184Z"/>
<path fill="#fb0300" d="M673,187 666,191 660,197 648,204 645,216 645,506 647,515 651,520 659,524 666,531 673,535 680,537 807,537 814,535 821,531 829,524 840,519 843,509 843,213 842,210 838,206 833,204 821,191 814,187 807,185 680,185Z"/>
<path fill="#ff0300" d="M674,187 668,190 659,198 652,201 648,205 646,213 646,509 648,516 651,520 659,524 668,532 681,537 806,537 813,535 819,532 827,525 838,520 840,518 843,504 843,218 842,217 842,211 839,207 833,204 819,190 806,185 681,185Z"/>
<path fill="#ff0a00" d="M675,187 666,192 661,197 653,201 649,205 646,219 646,503 647,504 648,514 652,520 660,524 669,532 675,535 685,536 686,537 801,537 802,536 812,535 821,530 828,524 837,520 840,515 842,505 842,217 841,216 841,211 838,207 832,204 821,192 808,186 802,186 801,185 686,185 685,186Z"/>
<path fill="#ff1000" d="M674,188 651,203 647,216 647,506 649,515 654,521 660,524 668,531 681,536 806,536 813,534 819,531 826,525 836,520 839,516 841,507 841,215 840,211 836,206 833,205 819,191 806,186 681,186Z"/>
<path fill="#ff1600" d="M675,188 666,193 659,199 654,201 650,206 648,214 648,508 650,516 652,519 662,525 669,531 675,534 683,536 804,536 812,534 818,531 827,524 834,521 837,518 840,509 840,213 839,210 834,205 830,203 821,193 812,188 804,186 683,186Z"/>
<path fill="#ff1d00" d="M673,189 661,198 655,201 651,205 648,218 648,504 650,514 654,520 661,524 668,530 673,533 680,535 807,535 814,533 825,525 833,521 837,517 840,504 840,218 838,209 831,204 819,192 814,189 807,187 680,187Z"/>
<path fill="#ff2300" d="M674,189 653,203 649,215 649,507 651,515 656,521 663,525 667,529 674,533 681,535 806,535 813,533 826,524 834,520 837,515 839,507 839,215 838,211 820,193 813,189 806,187 681,187Z"/>
<path fill="#ff2900" d="M675,189 666,194 653,204 649,219 649,503 652,516 655,520 662,524 669,530 675,533 683,535 804,535 812,533 832,521 835,518 838,509 838,213 835,207 830,204 818,192 812,189 804,187 683,187Z"/>
<path fill="#ff2f00" d="M676,189 668,193 655,202 650,215 650,507 653,517 668,529 680,534 807,534 811,533 830,522 835,517 838,505 838,217 836,209 819,193 807,188 680,188Z"/>
<path fill="#ff3600" d="M674,190 654,204 650,219 650,503 653,516 656,520 670,530 681,534 806,534 813,532 831,521 835,515 837,508 837,214 836,210 833,206 817,192 806,188 681,188Z"/>
<path fill="#ff3c00" d="M675,190 656,202 653,207 651,214 651,508 653,515 659,522 669,529 682,534 805,534 812,532 829,522 833,518 837,506 837,216 835,209 818,193 805,188 682,188Z"/>
<path fill="#ff4200" d="M673,191 659,200 655,204 651,216 651,506 653,514 658,521 671,530 684,534 803,534 814,531 833,518 837,503 837,219 835,210 819,194 814,191 803,188 684,188Z"/>
<path fill="#ff4800" d="M676,190 668,194 656,203 653,209 651,218 651,504 653,513 656,519 668,528 676,532 686,533 687,534 800,534 801,533 811,532 831,520 836,507 836,215 833,207 817,193 811,190 801,189 800,188 687,188 686,189Z"/>
<path fill="#ff4f00" d="M674,191 657,202 652,214 652,508 655,517 670,529 680,533 807,533 813,531 828,522 832,518 836,505 836,217 834,209 817,193 807,189 680,189Z"/>
<path fill="#ff5500" d="M675,191 660,200 656,204 652,216 652,506 654,514 656,518 669,528 681,533 806,533 812,531 823,525 831,519 835,509 835,504 836,503 836,219 834,210 818,194 806,189 681,189Z"/>
<path fill="#ff5b00" d="M675,191 657,203 654,209 652,217 652,505 654,513 657,519 675,531 683,533 804,533 812,531 826,523 832,517 835,507 835,215 832,207 819,195 812,191 804,189 683,189Z"/>
<path fill="#ff6200" d="M676,191 658,202 655,207 652,220 652,502 655,515 661,522 668,527 676,531 684,533 803,533 814,530 827,522 831,518 835,506 835,216 833,209 820,196 811,191 803,189 684,189Z"/>
<path fill="#ff6800" d="M676,191 661,200 657,204 653,215 653,507 655,514 661,522 676,531 686,532 687,533 800,533 801,532 811,531 822,525 830,519 835,504 835,218 833,210 817,194 811,191 801,190 800,189 687,189 686,190Z"/>
<path fill="#ff6e00" d="M674,192 658,203 653,216 653,506 655,513 660,521 672,529 681,532 806,532 813,530 825,523 830,518 834,508 834,214 831,207 818,195 813,192 806,190 681,190Z"/>
<path fill="#ff7500" d="M675,192 659,202 656,207 653,218 653,504 656,515 663,523 669,527 681,532 806,532 812,530 823,524 830,518 834,506 834,216 832,209 818,195 806,190 681,190Z"/>
<path fill="#ff7b00" d="M675,192 663,199 658,204 654,214 654,220 653,221 653,501 656,514 662,522 675,530 683,532 804,532 812,530 829,519 832,513 834,505 834,217 832,210 819,196 812,192 804,190 683,190Z"/>
<path fill="#ff8100" d="M676,192 668,196 658,204 654,215 654,507 655,511 659,519 665,524 676,530 684,532 803,532 811,530 824,523 830,517 834,503 834,219 832,210 820,197 811,192 803,190 684,190Z"/>
<path fill="#ff8800" d="M676,192 659,203 654,216 654,506 656,513 660,520 670,527 676,530 686,532 801,532 811,530 822,524 829,518 833,507 833,215 830,207 817,195 811,192 801,190 686,190Z"/>
<path fill="#ff8e00" d="M672,194 664,199 658,205 654,218 654,504 657,515 663,522 672,528 680,531 807,531 813,529 825,522 828,519 833,506 833,216 831,209 818,196 807,191 680,191Z"/>
<path fill="#ff9400" d="M675,193 663,200 659,204 655,214 655,220 654,221 654,501 657,514 659,518 666,524 675,529 682,531 805,531 812,529 823,523 829,517 833,504 833,218 831,210 819,197 812,193 805,191 682,191Z"/>
<path fill="#ff9a00" d="M676,193 661,202 657,209 655,216 655,506 659,517 665,523 676,529 683,531 804,531 811,529 821,524 828,518 832,507 832,215 829,207 817,196 804,191 683,191Z"/>
<path fill="#ffa000" d="M674,194 664,200 660,204 657,210 655,218 655,504 657,512 660,518 670,526 680,530 685,530 686,531 801,531 813,528 826,520 830,513 832,506 832,216 831,212 827,205 818,197 813,194 801,191 686,191Z"/>
<path fill="#ffa600" d="M677,193 669,197 661,203 657,211 655,221 655,501 657,511 659,516 663,521 669,525 681,530 806,530 810,529 820,524 827,518 830,512 832,504 832,218 830,210 819,198 806,192 681,192Z"/>
<path fill="#ffac00" d="M673,195 665,200 660,205 656,216 656,506 660,517 665,522 673,527 682,530 805,530 812,528 826,519 831,507 831,215 828,207 817,197 805,192 682,192Z"/>
<path fill="#ffb200" d="M676,194 665,200 661,204 658,210 656,218 656,504 658,512 661,518 664,521 676,528 684,530 803,530 811,528 819,524 826,518 831,506 831,216 828,208 818,198 811,194 803,192 684,192Z"/>
<path fill="#ffb800" d="M677,194 663,202 658,211 656,220 656,502 658,511 661,517 669,524 677,528 687,530 800,530 813,527 825,519 828,514 831,504 831,218 827,207 816,197 807,193 801,193 800,192 687,192Z"/>
<path fill="#ffbf00" d="M675,195 666,200 662,204 659,209 657,216 657,506 659,513 666,522 681,529 806,529 820,523 826,517 829,511 830,501 831,500 831,222 828,209 817,198 806,193 681,193Z"/>
<path fill="#ffc500" d="M676,195 663,203 659,210 657,217 657,505 659,512 663,519 668,523 682,529 805,529 814,526 821,522 825,518 830,506 830,216 827,208 818,199 811,195 804,193 682,193Z"/>
<path fill="#ffcb00" d="M674,196 667,200 662,205 659,211 657,219 657,503 659,511 662,517 667,522 674,526 684,529 803,529 811,527 824,519 827,514 830,504 830,218 829,213 826,207 819,200 813,196 803,193 684,193Z"/>
<path fill="#ffd100" d="M677,195 669,199 663,204 658,215 658,222 657,223 657,499 660,513 663,518 669,523 677,527 686,529 801,529 813,526 820,522 825,517 828,511 830,502 830,220 828,211 826,207 816,198 807,194 801,194 800,193 686,193Z"/>
<path fill="#ffd700" d="M675,196 664,203 658,216 658,506 659,510 665,520 671,524 681,528 806,528 810,527 818,523 824,518 829,507 829,215 824,205 817,199 806,194 681,194Z"/>
<path fill="#ffdd00" d="M673,197 668,200 662,206 658,217 658,505 662,516 668,522 682,528 805,528 812,526 823,519 829,506 829,216 827,210 818,200 805,194 682,194Z"/>
<path fill="#ffe400" d="M676,196 667,201 663,205 658,218 658,504 660,511 663,517 667,521 676,526 683,528 804,528 811,526 819,522 824,517 829,505 829,217 825,207 819,201 811,196 804,194 683,194Z"/>
<path fill="#ffea00" d="M674,197 664,204 661,209 658,220 658,502 661,513 664,518 672,524 684,528 803,528 811,526 820,521 824,517 827,511 829,503 829,219 827,211 824,206 816,199 803,194 684,194Z"/>
<path fill="#fff000" d="M677,196 669,200 663,206 659,216 659,506 663,516 669,522 677,526 686,528 801,528 815,524 823,518 826,513 829,501 829,221 827,212 823,205 817,200 810,196 800,194 687,194Z"/>
<path fill="#fff600" d="M675,197 668,201 664,205 661,210 659,217 659,505 661,512 668,521 681,527 806,527 818,522 824,516 828,506 828,216 826,210 818,201 806,195 681,195Z"/>
<path fill="#ffff00" d="M678,196 665,204 661,211 659,218 659,504 661,511 667,520 682,527 805,527 812,525 819,521 823,517 828,505 828,217 824,207 815,199 805,195 682,195Z"/>
<path fill="#ffff09" d="M674,198 664,206 660,215 660,221 659,222 659,500 661,510 664,516 669,521 674,524 684,527 803,527 817,522 823,516 826,510 828,502 828,220 826,212 824,208 817,201 810,197 802,195 685,195Z"/>
<path fill="#ffff10" d="M671,200 665,205 660,216 660,506 662,512 668,520 680,526 800,527 810,525 818,521 822,517 827,506 827,216 825,210 818,202 806,196 681,196Z"/>
<path fill="#ffff16" d="M673,199 664,207 660,218 660,504 664,515 670,521 681,526 806,526 812,524 821,518 827,505 827,217 823,207 819,203 813,199 805,196 682,196Z"/>
<path fill="#ffff1c" d="M676,198 670,201 665,206 661,214 660,219 660,503 661,508 665,516 670,521 683,526 805,526 809,525 817,521 822,516 825,511 827,504 827,218 825,211 816,201 804,196 683,196Z"/>
<path fill="#ffff22" d="M674,199 669,202 664,208 661,215 661,221 660,222 660,500 662,510 666,517 672,522 684,526 803,526 811,524 821,517 825,510 827,502 827,220 825,212 823,208 817,202 810,198 803,196 684,196Z"/>
<path fill="#ffff29" d="M677,198 671,201 665,207 661,216 661,506 665,515 671,521 677,524 686,526 801,526 810,524 819,519 824,512 826,506 826,216 822,207 819,204 806,197 687,196Z"/>
<path fill="#ffff2f" d="M675,199 666,206 663,211 661,218 661,504 663,511 670,520 681,525 806,525 816,521 821,516 826,505 826,217 824,211 816,202 805,197 681,197Z"/>
<path fill="#ffff35" d="M676,199 668,204 663,212 661,219 661,503 663,510 669,519 682,525 805,525 809,524 817,520 820,517 825,508 826,503 826,219 825,214 822,208 817,203 804,197 682,197Z"/>
<path fill="#ffff3b" d="M674,200 666,207 662,216 662,506 666,515 671,520 679,524 684,525 804,525 815,521 821,515 824,510 826,501 826,221 824,212 818,204 810,199 802,197 684,197Z"/>
<path fill="#ffff42" d="M677,199 667,206 662,217 662,505 663,509 670,519 677,523 686,525 802,525 810,523 816,520 820,516 825,506 825,216 822,209 816,203 806,198 686,197Z"/>
<path fill="#ffff47" d="M672,202 666,208 662,218 662,504 666,514 672,520 681,524 806,524 812,522 819,517 825,504 825,218 821,208 817,204 805,198 681,198Z"/>
<path fill="#ffff4e" d="M672,202 667,207 664,212 662,219 662,503 664,510 672,520 682,524 806,524 815,520 821,514 825,503 825,219 823,212 817,204 804,198 682,198Z"/>
<path fill="#ffff54" d="M676,200 667,207 663,215 663,220 662,221 662,501 663,502 663,507 667,515 671,519 676,522 683,524 805,524 815,520 820,515 823,510 825,502 825,220 823,212 818,205 810,200 803,198 683,198Z"/>
<path fill="#ffff5b" d="M679,199 671,203 668,206 663,216 663,506 664,509 670,518 683,524 804,524 811,522 816,519 821,513 824,506 824,501 825,500 825,222 823,213 821,209 815,203 807,199 802,198 684,198Z"/>
<path fill="#ffff61" d="M677,200 673,202 666,209 663,217 663,505 666,513 673,520 684,524 803,524 808,523 818,517 824,506 824,216 821,209 816,204 809,200 801,198 685,198Z"/>
<path fill="#ffff67" d="M677,200 673,202 667,208 663,217 663,505 667,514 673,520 680,523 685,523 686,524 802,524 810,522 814,520 820,514 824,505 824,217 822,211 816,204 806,199 686,198Z"/>
<path fill="#ffff6d" d="M672,203 668,207 663,218 663,504 664,508 668,515 672,519 681,523 801,524 810,522 814,520 820,514 824,504 824,218 820,208 817,205 805,199 681,199Z"/>
<path fill="#ffff74" d="M678,200 668,207 665,212 663,219 663,503 665,510 671,518 681,523 806,523 815,519 819,515 824,504 824,218 822,212 818,206 814,203 804,199 682,199Z"/>
<path fill="#ffff7a" d="M676,201 670,205 667,209 663,220 663,502 664,507 670,517 674,520 682,523 806,523 809,522 818,516 823,507 824,502 824,220 823,215 820,209 815,204 810,201 803,199 682,199Z"/>
<path fill="#ffff80" d="M673,203 668,208 664,216 664,506 665,509 673,519 683,523 805,523 811,521 820,513 823,506 823,501 824,500 824,222 822,213 820,209 815,204 809,201 801,199 683,199Z"/>
<path fill="#ffff86" d="M677,201 673,203 668,208 664,217 664,505 668,514 673,519 684,523 804,523 814,519 819,514 823,505 823,217 821,211 816,205 805,200 685,199Z"/>
<path fill="#ffff8d" d="M675,202 669,207 664,218 664,504 665,508 672,518 681,522 802,523 810,521 818,515 823,505 823,217 820,210 814,204 804,200 681,200Z"/>
<path fill="#ffff93" d="M674,203 668,209 664,219 664,503 668,513 674,519 682,522 806,522 813,519 819,513 823,503 823,219 821,212 815,205 807,201 802,200 682,200Z"/>
<path fill="#ffff99" d="M679,201 673,204 669,208 665,216 665,506 667,511 673,518 683,522 805,522 811,520 820,511 823,501 823,221 821,213 816,206 806,201 764,201 763,200 684,200Z"/>
<path fill="#ffff9f" d="M680,201 674,204 668,210 665,218 665,504 668,512 677,520 685,522 803,522 810,520 817,515 822,505 822,217 819,210 814,205 804,201 696,201 695,200Z"/>
<path fill="#ffffa5" d="M678,202 670,208 665,219 665,503 666,507 673,517 681,521 786,521 787,522 800,522 809,520 813,518 818,513 822,503 822,219 818,209 815,206 807,202 802,201 682,201Z"/>
<path fill="#ffffab" d="M675,204 669,210 666,217 666,505 669,512 675,518 683,521 805,521 816,515 820,509 822,500 822,222 820,213 813,205 806,202 776,202 775,201 683,201Z"/>
<path fill="#ffffb2" d="M680,202 674,205 670,209 666,218 666,504 670,513 674,517 685,521 804,521 810,519 817,513 821,505 821,217 820,214 814,206 804,202 710,202 709,201 685,201Z"/>
<path fill="#ffffb8" d="M679,203 671,209 667,217 667,505 668,508 674,516 682,520 805,520 812,517 817,512 820,506 820,501 821,500 821,222 820,221 820,216 817,210 814,207 806,203 788,203 787,202 683,202Z"/>
<path fill="#ffffbe" d="M679,204 672,209 668,216 667,221 667,501 668,506 672,513 675,516 681,519 802,520 809,518 816,512 820,502 820,220 818,213 813,207 802,203 682,203Z"/>
<path fill="#ffffc4" d="M681,204 673,209 668,220 668,502 669,506 674,514 685,519 803,519 807,518 815,512 819,503 819,219 817,213 813,208 804,204 708,204 707,203 686,203Z"/>
<path fill="#ffffca" d="M677,207 672,212 669,220 669,502 672,510 677,515 685,518 803,518 810,515 815,510 818,503 818,219 815,212 810,207 804,205 749,205 748,204 743,205 685,204Z"/>
<path fill="#ffffd1" d="M682,206 678,208 673,213 671,217 671,505 673,509 678,514 682,516 802,517 808,515 814,509 817,501 817,221 816,217 812,210 804,206Z"/>
<path fill="#ffffd7" d="M682,208 674,215 673,218 673,504 674,507 680,513 687,515 803,515 806,514 812,509 815,502 815,220 814,217 809,210 800,207 744,207 743,208 687,207Z"/>
<path fill="#ffffdd" d="M684,214 681,216 679,220 679,502 681,506 684,508 743,508 744,510 804,510 810,504 810,218 804,212 744,212 743,214Z"/>
</g></g>
<rect x="88" y="31" width="1" height="729" fill="url(#gv0)"/><rect x="179" y="31" width="1" height="729" fill="url(#gv1)"/><rect x="271" y="31" width="1" height="729" fill="url(#gv2)"/><rect x="362" y="31" width="1" height="729" fill="url(#gv3)"/><rect x="453" y="31" width="1" height="729" fill="url(#gv4)"/><rect x="544" y="31" width="1" height="729" fill="url(#gv5)"/><rect x="635" y="31" width="1" height="729" fill="url(#gv6)"/><rect x="726" y="31" width="1" height="729" fill="url(#gv7)"/><rect x="817" y="31" width="1" height="729" fill="url(#gv8)"/><rect x="908" y="31" width="1" height="729" fill="url(#gv9)"/><rect x="999" y="31" width="1" height="729" fill="url(#gv10)"/><rect x="1090" y="31" width="1" height="729" fill="url(#gv11)"/><rect x="63" y="52" width="1054" height="1" fill="url(#gh12)"/><rect x="63" y="121" width="1054" height="1" fill="url(#gh13)"/><rect x="63" y="189" width="1054" height="1" fill="url(#gh14)"/><rect x="63" y="257" width="1054" height="1" fill="url(#gh15)"/><rect x="63" y="326" width="1054" height="1" fill="url(#gh16)"/><rect x="63" y="394" width="1054" height="1" fill="url(#gh17)"/><rect x="63" y="462" width="1054" height="1" fill="url(#gh18)"/><rect x="63" y="531" width="1054" height="1" fill="url(#gh19)"/><rect x="63" y="599" width="1054" height="1" fill="url(#gh20)"/><rect x="63" y="667" width="1054" height="1" fill="url(#gh21)"/><rect x="63" y="736" width="1054" height="1" fill="url(#gh22)"/>
<line x1="125" y1="370.5" x2="700" y2="370.5" stroke="#fff" stroke-width="1" stroke-dasharray="2 1"/><line x1="700" y1="370.5" x2="803" y2="370.5" stroke="#222" stroke-width="1" stroke-dasharray="1 2"/><rect x="120.5" y="368.5" width="4" height="4" fill="#fff" stroke="#b03030" stroke-width="1"/><rect x="803.5" y="368.5" width="4" height="4" fill="#fff" stroke="#8b2020" stroke-width="1"/><rect x="807.5" y="359.5" width="18" height="22" fill="#fff5f5" stroke="#8b2020" stroke-width="1"/><text x="816.5" y="376.6" text-anchor="middle" fill="#b80000" style="font-family:'Liberation Sans',sans-serif;font-size:17px">1</text>
<g style="font-family:'Liberation Sans',sans-serif;font-size:18px" fill="#000"><text x="88.5" y="27.6" text-anchor="middle">-40</text><text x="179.5" y="27.6" text-anchor="middle">-36</text><text x="271.5" y="27.6" text-anchor="middle">-32</text><text x="362.5" y="27.6" text-anchor="middle">-28</text><text x="453.5" y="27.6" text-anchor="middle">-24</text><text x="544.5" y="27.6" text-anchor="middle">-20</text><text x="635.5" y="27.6" text-anchor="middle">-16</text><text x="726.5" y="27.6" text-anchor="middle">-12</text><text x="817.5" y="27.6" text-anchor="middle">-8</text><text x="908.5" y="27.6" text-anchor="middle">-4</text><text x="999.5" y="27.6" text-anchor="middle">0</text><text x="1090.5" y="27.6" text-anchor="middle">4</text><text x="59.5" y="62.7" text-anchor="end">15</text><text x="59.5" y="131.7" text-anchor="end">12</text><text x="59.5" y="199.7" text-anchor="end">9</text><text x="59.5" y="267.7" text-anchor="end">6</text><text x="59.5" y="336.7" text-anchor="end">3</text><text x="59.5" y="404.7" text-anchor="end">0</text><text x="59.5" y="472.7" text-anchor="end">-3</text><text x="59.5" y="541.7" text-anchor="end">-6</text><text x="59.5" y="609.7" text-anchor="end">-9</text><text x="59.5" y="677.7" text-anchor="end">-12</text><text x="59.5" y="746.7" text-anchor="end">-15</text></g>
<rect x="1116.5" y="31.5" width="99" height="726" fill="#fff" stroke="#000" stroke-width="1"/><rect x="1121" y="62" width="89" height="688" fill="url(#cbg)"/><rect x="1154.8" y="76.8" width="22.6" height="23.2" fill="#fff"/><rect x="1154.8" y="98.2" width="22.6" height="23.2" fill="#fff"/><rect x="1154.8" y="164.4" width="22.6" height="23.2" fill="#fff"/><rect x="1159.5" y="213.3" width="13.2" height="23.2" fill="#fff"/><rect x="1159.5" y="279.6" width="13.2" height="23.2" fill="#fff"/><rect x="1159.5" y="318.4" width="13.2" height="23.2" fill="#fff"/><rect x="1159.5" y="384.6" width="13.2" height="23.2" fill="#fff"/><rect x="1152.0" y="433.5" width="28.2" height="23.2" fill="#fff"/><rect x="1152.0" y="499.8" width="28.2" height="23.2" fill="#fff"/><rect x="1152.0" y="538.6" width="28.2" height="23.2" fill="#fff"/><rect x="1152.0" y="604.8" width="28.2" height="23.2" fill="#fff"/><rect x="1147.3" y="653.7" width="37.5" height="23.2" fill="#fff"/><text x="1166.1" y="94.9" text-anchor="middle" style="font-family:'Liberation Sans',sans-serif;font-size:18px">25</text><text x="1166.1" y="116.3" text-anchor="middle" style="font-family:'Liberation Sans',sans-serif;font-size:18px">20</text><text x="1166.1" y="182.5" text-anchor="middle" style="font-family:'Liberation Sans',sans-serif;font-size:18px">10</text><text x="1166.1" y="231.4" text-anchor="middle" style="font-family:'Liberation Sans',sans-serif;font-size:18px">6</text><text x="1166.1" y="297.7" text-anchor="middle" style="font-family:'Liberation Sans',sans-serif;font-size:18px">3</text><text x="1166.1" y="336.5" text-anchor="middle" style="font-family:'Liberation Sans',sans-serif;font-size:18px">2</text><text x="1166.1" y="402.7" text-anchor="middle" style="font-family:'Liberation Sans',sans-serif;font-size:18px">1</text><text x="1166.1" y="451.6" text-anchor="middle" style="font-family:'Liberation Sans',sans-serif;font-size:18px">0,6</text><text x="1166.1" y="517.9" text-anchor="middle" style="font-family:'Liberation Sans',sans-serif;font-size:18px">0,3</text><text x="1166.1" y="556.7" text-anchor="middle" style="font-family:'Liberation Sans',sans-serif;font-size:18px">0,2</text><text x="1166.1" y="622.9" text-anchor="middle" style="font-family:'Liberation Sans',sans-serif;font-size:18px">0,1</text><text x="1166.1" y="671.8" text-anchor="middle" style="font-family:'Liberation Sans',sans-serif;font-size:18px">0,06</text><text x="1117" y="54.5" textLength="98" lengthAdjust="spacing" style="font-family:'Liberation Sans',sans-serif;font-size:18px">L2 [ cd/m² ]</text>
<rect x="1271.5" y="18.5" width="384" height="707.5" fill="#fff"/><g stroke="#c0c0c0" stroke-width="1" stroke-dasharray="3.6 1.53"><line x1="1334.5" y1="19" x2="1334.5" y2="726"/><line x1="1398.5" y1="19" x2="1398.5" y2="726"/><line x1="1462.5" y1="19" x2="1462.5" y2="726"/><line x1="1527.5" y1="19" x2="1527.5" y2="726"/><line x1="1591.5" y1="19" x2="1591.5" y2="726"/><line x1="1272" y1="679.5" x2="1655" y2="679.5"/><line x1="1272" y1="631.5" x2="1655" y2="631.5"/><line x1="1272" y1="584.5" x2="1655" y2="584.5"/><line x1="1272" y1="537.5" x2="1655" y2="537.5"/><line x1="1272" y1="490.5" x2="1655" y2="490.5"/><line x1="1272" y1="443.5" x2="1655" y2="443.5"/><line x1="1272" y1="395.5" x2="1655" y2="395.5"/><line x1="1272" y1="348.5" x2="1655" y2="348.5"/><line x1="1272" y1="301.5" x2="1655" y2="301.5"/><line x1="1272" y1="254.5" x2="1655" y2="254.5"/><line x1="1272" y1="207.5" x2="1655" y2="207.5"/><line x1="1272" y1="159.5" x2="1655" y2="159.5"/><line x1="1272" y1="112.5" x2="1655" y2="112.5"/><line x1="1272" y1="65.5" x2="1655" y2="65.5"/></g><path d="M1271.5,18.5 V726.5 H1655.5 V18.5 Z" fill="none" stroke="#222" stroke-width="1.3"/><path d="M1266,726.5H1271.5M1266,679.5H1271.5M1266,631.5H1271.5M1266,584.5H1271.5M1266,537.5H1271.5M1266,490.5H1271.5M1266,443.5H1271.5M1266,395.5H1271.5M1266,348.5H1271.5M1266,301.5H1271.5M1266,254.5H1271.5M1266,207.5H1271.5M1266,159.5H1271.5M1266,112.5H1271.5M1266,65.5H1271.5M1266,18.5H1271.5M1271.5,726.5V731M1334.5,726.5V731M1398.5,726.5V731M1462.5,726.5V731M1527.5,726.5V731M1591.5,726.5V731M1655.5,726.5V731" stroke="#222" stroke-width="1.3" fill="none"/><g style="font-family:'Liberation Sans',sans-serif;font-size:10px" fill="#222"><text x="1263" y="726.9" text-anchor="end">0</text><text x="1263" y="679.7" text-anchor="end">2</text><text x="1263" y="632.5" text-anchor="end">4</text><text x="1263" y="585.3" text-anchor="end">6</text><text x="1263" y="538.1" text-anchor="end">8</text><text x="1263" y="490.9" text-anchor="end">10</text><text x="1263" y="443.7" text-anchor="end">12</text><text x="1263" y="396.5" text-anchor="end">14</text><text x="1263" y="349.3" text-anchor="end">16</text><text x="1263" y="302.1" text-anchor="end">18</text><text x="1263" y="254.9" text-anchor="end">20</text><text x="1263" y="207.7" text-anchor="end">22</text><text x="1263" y="160.5" text-anchor="end">24</text><text x="1263" y="113.3" text-anchor="end">26</text><text x="1263" y="66.1" text-anchor="end">28</text><text x="1263" y="18.9" text-anchor="end">30</text><text x="1271.0" y="742.2" text-anchor="middle">0</text><text x="1335.0" y="742.2" text-anchor="middle">5</text><text x="1399.0" y="742.2" text-anchor="middle">10</text><text x="1463.0" y="742.2" text-anchor="middle">15</text><text x="1527.0" y="742.2" text-anchor="middle">20</text><text x="1591.0" y="742.2" text-anchor="middle">25</text><text x="1655.0" y="742.2" text-anchor="middle">30</text></g><text x="1251" y="10.8" textLength="50" lengthAdjust="spacing" style="font-family:'Liberation Sans',sans-serif;font-size:10.5px" fill="#333">L2[cd/m²]</text><text x="1397" y="14.6" textLength="166.5" lengthAdjust="spacingAndGlyphs" style="font-family:'Liberation Sans',sans-serif;font-size:18px;font-weight:bold" fill="#111">Screen Reflectivity</text><text x="1666" y="727.5" text-anchor="middle" style="font-family:'Liberation Sans',sans-serif;font-size:11px" fill="#333">°</text><rect x="1662" y="368.5" width="4" height="4" fill="#e00000"/><text x="1673" y="373.8" textLength="58" lengthAdjust="spacingAndGlyphs" style="font-family:'Liberation Sans',sans-serif;font-size:10.5px;font-weight:bold" fill="#111">20010-2-1</text><polyline points="1297,231.5 1299,234 1301,239 1303,246 1305,251 1307,258 1308.3,265 1309.2,275 1310.7,300.5 1312,328 1312.8,347 1313.8,405 1314.8,460 1314.8,459.6 1316.3,537.5 1319.6,631.9 1322.2,660.2 1324.4,679.1 1326.8,690.9 1330.6,702.0 1333.8,706.7 1340.1,712.1 1349.5,716.9 1360.6,719.9 1379.4,722.3 1399.0,723.5 1411.8,723.7 1437.4,724.4 1463.0,725.1 1527.0,725.4 1655.0,725.6" fill="none" stroke="#e00000" stroke-width="1.8" stroke-linejoin="round"/><polygon points="1271,232.5 1276,228 1279,229 1282,231 1284,227.5 1286,223.5 1288,229 1290,230 1296,231 1298,232 1297,233 1294,234 1290,237 1287,239 1284,233 1282,237.5 1279,234 1275,237 1271,240" fill="#e00000"/>
</svg>
</body></html>
